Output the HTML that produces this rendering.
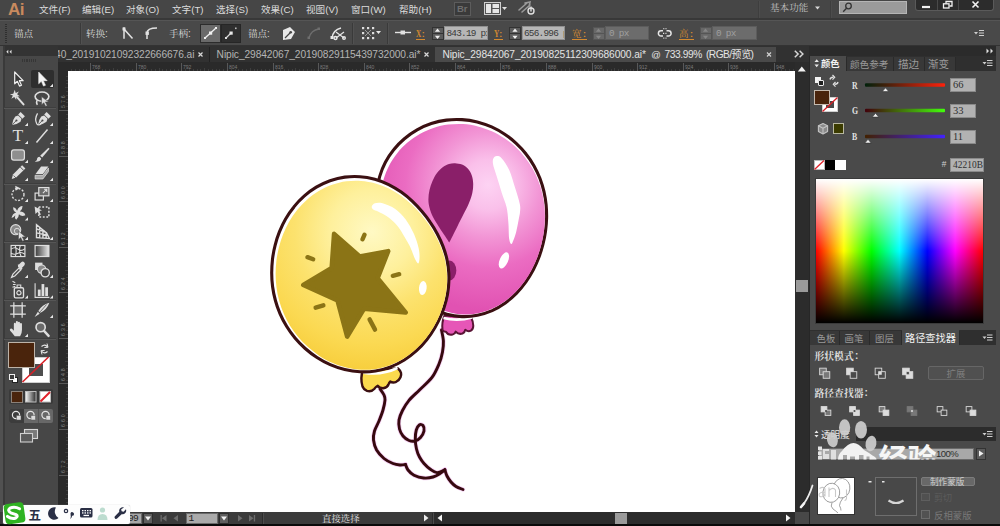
<!DOCTYPE html>
<html><head><meta charset="utf-8"><title>Adobe Illustrator</title>
<style>
html,body{margin:0;padding:0;background:#464646;}
body{width:1000px;height:526px;overflow:hidden;position:relative;font-family:"Liberation Sans",sans-serif;}
#app{position:absolute;left:0;top:0;width:1000px;height:526px;overflow:hidden;background:#464646;}
#app div,#app span{position:absolute;box-sizing:border-box;white-space:nowrap;}
#ov{position:absolute;left:0;top:0;}
#ov text{font-family:"Liberation Sans","Noto Sans CJK SC",sans-serif;}
#ov text.sf{font-family:"Liberation Serif","Noto Serif CJK SC",serif;}
</style></head><body><div id="app">
<div style="left:0px;top:0px;width:1000px;height:20px;background:#464646;"></div>
<div style="left:0px;top:18px;width:1000px;height:1.5px;background:#383838;"></div>
<div style="left:0px;top:20px;width:1000px;height:1px;background:#555;"></div>
<div style="left:0px;top:21px;width:1000px;height:25px;background:#494949;"></div>
<div style="left:0px;top:45px;width:1000px;height:1px;background:#333;"></div>
<div style="left:58px;top:46px;width:751px;height:16px;background:#313131;"></div>
<div style="left:58px;top:62px;width:751px;height:9px;background:#2a2a2a;"></div>
<div style="left:68px;top:71px;width:727px;height:441px;background:#fff;"></div>
<div style="left:58px;top:71px;width:10px;height:441px;background:#2a2a2a;"></div>
<div style="left:795px;top:62px;width:14px;height:450px;background:#2c2c2c;"></div>
<div style="left:796px;top:280px;width:12px;height:12px;background:#9a9a9a;"></div>
<div style="left:0px;top:512px;width:809px;height:12px;background:#3b3b3b;"></div>
<div style="left:0px;top:524px;width:1000px;height:2px;background:#0a0a0a;"></div>
<div style="left:0px;top:46px;width:58px;height:466px;background:#474747;"></div>
<div style="left:0px;top:46px;width:58px;height:10px;background:#333;"></div>
<div style="left:0px;top:46px;width:2.5px;height:466px;background:#515151;"></div>
<div style="left:2.5px;top:46px;width:2px;height:466px;background:#3a3a3a;"></div>
<div style="left:809px;top:46px;width:191px;height:478px;background:#4a4a4a;"></div>
<div style="left:808.5px;top:46px;width:1.8px;height:478px;background:#272727;"></div>
<span style="left:8px;top:-0.38px;font-size:17px;line-height:19.533px;color:#c98a5e;letter-spacing:-0.500px;font-weight:bold;">Ai</span>
<div style="left:454px;top:2px;width:17px;height:14px;background:#3a3a3a;border:1px solid #5c5c5c;"></div>
<span style="left:457px;top:4.40px;font-size:9.5px;line-height:10.915px;color:#6e6e6e;font-weight:bold;">Br</span>
<div style="left:758px;top:1px;width:1px;height:17px;background:#3e3e3e;"></div>
<div style="left:759px;top:1px;width:1px;height:17px;background:#4c4c4c;"></div>
<div style="left:830px;top:1px;width:1px;height:17px;background:#3e3e3e;"></div>
<div style="left:831px;top:1px;width:1px;height:17px;background:#4c4c4c;"></div>
<div style="left:839px;top:1px;width:68px;height:13px;background:#9b9b9b;border:1px solid #b5b5b5;"></div>
<div style="left:915px;top:0px;width:79px;height:11px;background:#2c2c2c;border-radius:0 0 3px 3px;border:1px solid #5a5a5a;border-top:none;"></div>
<div style="left:937px;top:0px;width:1px;height:10px;background:#4a4a4a;"></div>
<div style="left:958px;top:0px;width:1px;height:10px;background:#4a4a4a;"></div>
<div style="left:5px;top:24px;width:2px;height:1px;background:#2f2f2f;"></div>
<div style="left:5px;top:26px;width:2px;height:1px;background:#2f2f2f;"></div>
<div style="left:5px;top:28px;width:2px;height:1px;background:#2f2f2f;"></div>
<div style="left:5px;top:30px;width:2px;height:1px;background:#2f2f2f;"></div>
<div style="left:5px;top:32px;width:2px;height:1px;background:#2f2f2f;"></div>
<div style="left:5px;top:34px;width:2px;height:1px;background:#2f2f2f;"></div>
<div style="left:5px;top:36px;width:2px;height:1px;background:#2f2f2f;"></div>
<div style="left:5px;top:38px;width:2px;height:1px;background:#2f2f2f;"></div>
<div style="left:5px;top:40px;width:2px;height:1px;background:#2f2f2f;"></div>
<div style="left:5px;top:42px;width:2px;height:1px;background:#2f2f2f;"></div>
<div style="left:80px;top:23px;width:1px;height:21px;background:#3a3a3a;"></div>
<div style="left:81px;top:23px;width:1px;height:21px;background:#515151;"></div>
<span style="left:105px;top:27.95px;font-size:10px;line-height:11.49px;color:#d6d6d6;">:</span>
<span style="left:188px;top:27.95px;font-size:10px;line-height:11.49px;color:#d6d6d6;">:</span>
<div style="left:200px;top:24px;width:21px;height:19px;background:#6a6a6a;border:1px solid #2c2c2c;"></div>
<div style="left:221px;top:24px;width:20px;height:19px;background:#2f2f2f;border:1px solid #262626;"></div>
<span style="left:267px;top:27.95px;font-size:10px;line-height:11.49px;color:#d6d6d6;">:</span>
<div style="left:352px;top:23px;width:1px;height:21px;background:#3a3a3a;"></div>
<div style="left:353px;top:23px;width:1px;height:21px;background:#515151;"></div>
<div style="left:387px;top:23px;width:1px;height:21px;background:#3a3a3a;"></div>
<div style="left:388px;top:23px;width:1px;height:21px;background:#515151;"></div>
<span style="left:416.4px;top:28.43px;font-size:9.8px;line-height:11.26px;color:#d48a30;font-weight:bold;font-family:'Liberation Serif';transform-origin:0 0;transform:scaleX(0.74);">X</span>
<span style="left:421.7px;top:29.06px;font-size:9px;line-height:10.341px;color:#d48a30;font-weight:bold;">:</span>
<div style="left:416px;top:38.8px;width:9px;height:1px;background:#d48a30;"></div>
<div style="left:431.5px;top:26.5px;width:12px;height:7.2px;background:#5c5c5c;border:1px solid #333;"></div>
<div style="left:431.5px;top:33px;width:12px;height:7.2px;background:#5c5c5c;border:1px solid #333;"></div>
<div style="left:444px;top:26.2px;width:43.5px;height:14px;background:#b6b6b6;border:1px solid #909090;"></div>
<div style="left:446.4px;top:27px;width:40.5px;height:13px;overflow:hidden;"><span style="left:0;top:0.800px;font-family:'Liberation Mono';font-size:9.400px;line-height:12px;letter-spacing:-0.740px;color:#3a3a3a;">843.19 px</span></div>
<span style="left:494px;top:28.43px;font-size:9.8px;line-height:11.26px;color:#d48a30;font-weight:bold;font-family:'Liberation Serif';transform-origin:0 0;transform:scaleX(0.74);">Y</span>
<span style="left:499.3px;top:29.06px;font-size:9px;line-height:10.341px;color:#d48a30;font-weight:bold;">:</span>
<div style="left:493.6px;top:38.8px;width:9px;height:1px;background:#d48a30;"></div>
<div style="left:509px;top:26.5px;width:12px;height:7.2px;background:#5c5c5c;border:1px solid #333;"></div>
<div style="left:509px;top:33px;width:12px;height:7.2px;background:#5c5c5c;border:1px solid #333;"></div>
<div style="left:521.5px;top:26.2px;width:43.5px;height:14px;background:#b6b6b6;border:1px solid #909090;"></div>
<div style="left:523.9px;top:27px;width:40.5px;height:13px;overflow:hidden;"><span style="left:0;top:0.800px;font-family:'Liberation Mono';font-size:9.400px;line-height:12px;letter-spacing:-0.740px;color:#3a3a3a;">656.996 px</span></div>
<span style="left:583px;top:28.86px;font-size:9px;line-height:10.341px;color:#d48a30;font-weight:bold;">:</span>
<div style="left:572px;top:38.8px;width:15px;height:1px;background:#d48a30;"></div>
<div style="left:592.5px;top:26.5px;width:12px;height:7.2px;background:#686868;border:1px solid #555;"></div>
<div style="left:592.5px;top:33px;width:12px;height:7.2px;background:#686868;border:1px solid #555;"></div>
<div style="left:604.5px;top:26.2px;width:44.5px;height:14px;background:#6c6c6c;border:1px solid #5c5c5c;"></div>
<div style="left:609px;top:27px;width:39.5px;height:13px;overflow:hidden;"><span style="left:0;top:0.800px;font-family:'Liberation Mono';font-size:9.400px;line-height:12px;letter-spacing:-0.740px;color:#a0a0a0;">0 px</span></div>
<span style="left:690px;top:28.86px;font-size:9px;line-height:10.341px;color:#d48a30;font-weight:bold;">:</span>
<div style="left:679px;top:38.8px;width:15px;height:1px;background:#d48a30;"></div>
<div style="left:699.5px;top:26.5px;width:12px;height:7.2px;background:#686868;border:1px solid #555;"></div>
<div style="left:699.5px;top:33px;width:12px;height:7.2px;background:#686868;border:1px solid #555;"></div>
<div style="left:711.5px;top:26.2px;width:45.5px;height:14px;background:#6c6c6c;border:1px solid #5c5c5c;"></div>
<div style="left:716px;top:27px;width:40.5px;height:13px;overflow:hidden;"><span style="left:0;top:0.800px;font-family:'Liberation Mono';font-size:9.400px;line-height:12px;letter-spacing:-0.740px;color:#a0a0a0;">0 px</span></div>
<div style="left:58px;top:46px;width:160px;height:16px;overflow:hidden;"><span style="left:-2.9px;top:2.8px;font-size:10.2px;line-height:12px;color:#b4b4b4;letter-spacing:-0.07px;">40_20191021092322666676.ai</span></div>
<div style="left:209px;top:47px;width:1px;height:15px;background:#222;"></div>
<span style="left:216.6px;top:48.97px;font-size:10.2px;line-height:11.72px;color:#b4b4b4;letter-spacing:-0.072px;">Nipic_29842067_20190829115439732000.ai*</span>
<div style="left:435px;top:47px;width:341px;height:15px;background:#4a4a4a;"></div>
<span style="left:442.4px;top:48.97px;font-size:10.2px;line-height:11.72px;color:#e4e4e4;letter-spacing:-0.082px;">Nipic_29842067_20190825112309686000.ai*</span>
<span style="left:651.3px;top:49.69px;font-size:9.4px;line-height:10.801px;color:#e4e4e4;">@</span>
<span style="left:664.4px;top:48.97px;font-size:10.2px;line-height:11.72px;color:#e4e4e4;letter-spacing:-0.381px;">733.99%</span>
<span style="left:706px;top:48.97px;font-size:10.2px;line-height:11.72px;color:#e4e4e4;letter-spacing:-0.547px;">(RGB/</span>
<span style="left:750.5px;top:48.97px;font-size:10.2px;line-height:11.72px;color:#e4e4e4;">)</span>
<div style="left:22px;top:59px;width:1.2px;height:3px;background:#363636;"></div>
<div style="left:24.2px;top:59px;width:1.2px;height:3px;background:#363636;"></div>
<div style="left:26.4px;top:59px;width:1.2px;height:3px;background:#363636;"></div>
<div style="left:28.6px;top:59px;width:1.2px;height:3px;background:#363636;"></div>
<div style="left:30.8px;top:59px;width:1.2px;height:3px;background:#363636;"></div>
<div style="left:33px;top:59px;width:1.2px;height:3px;background:#363636;"></div>
<div style="left:35.2px;top:59px;width:1.2px;height:3px;background:#363636;"></div>
<div style="left:90px;top:63px;width:1px;height:8px;background:#585858;"></div>
<span style="left:92px;top:64.77px;font-size:5px;line-height:5.745px;color:#7c7c7c;">768</span>
<div style="left:94px;top:69px;width:1px;height:2px;background:#3e3e3e;"></div>
<div style="left:98px;top:69px;width:1px;height:2px;background:#3e3e3e;"></div>
<div style="left:102px;top:69px;width:1px;height:2px;background:#3e3e3e;"></div>
<div style="left:105px;top:69px;width:1px;height:2px;background:#3e3e3e;"></div>
<div style="left:109px;top:69px;width:1px;height:2px;background:#3e3e3e;"></div>
<div style="left:113px;top:68px;width:1px;height:3px;background:#3e3e3e;"></div>
<div style="left:117px;top:69px;width:1px;height:2px;background:#3e3e3e;"></div>
<div style="left:121px;top:69px;width:1px;height:2px;background:#3e3e3e;"></div>
<div style="left:124px;top:69px;width:1px;height:2px;background:#3e3e3e;"></div>
<div style="left:128px;top:69px;width:1px;height:2px;background:#3e3e3e;"></div>
<div style="left:132px;top:69px;width:1px;height:2px;background:#3e3e3e;"></div>
<div style="left:136px;top:63px;width:1px;height:8px;background:#585858;"></div>
<span style="left:138px;top:64.77px;font-size:5px;line-height:5.745px;color:#7c7c7c;">780</span>
<div style="left:140px;top:69px;width:1px;height:2px;background:#3e3e3e;"></div>
<div style="left:143px;top:69px;width:1px;height:2px;background:#3e3e3e;"></div>
<div style="left:147px;top:69px;width:1px;height:2px;background:#3e3e3e;"></div>
<div style="left:151px;top:69px;width:1px;height:2px;background:#3e3e3e;"></div>
<div style="left:155px;top:69px;width:1px;height:2px;background:#3e3e3e;"></div>
<div style="left:159px;top:68px;width:1px;height:3px;background:#3e3e3e;"></div>
<div style="left:162px;top:69px;width:1px;height:2px;background:#3e3e3e;"></div>
<div style="left:166px;top:69px;width:1px;height:2px;background:#3e3e3e;"></div>
<div style="left:170px;top:69px;width:1px;height:2px;background:#3e3e3e;"></div>
<div style="left:174px;top:69px;width:1px;height:2px;background:#3e3e3e;"></div>
<div style="left:178px;top:69px;width:1px;height:2px;background:#3e3e3e;"></div>
<div style="left:181px;top:63px;width:1px;height:8px;background:#585858;"></div>
<span style="left:183px;top:64.77px;font-size:5px;line-height:5.745px;color:#7c7c7c;">792</span>
<div style="left:185px;top:69px;width:1px;height:2px;background:#3e3e3e;"></div>
<div style="left:189px;top:69px;width:1px;height:2px;background:#3e3e3e;"></div>
<div style="left:193px;top:69px;width:1px;height:2px;background:#3e3e3e;"></div>
<div style="left:197px;top:69px;width:1px;height:2px;background:#3e3e3e;"></div>
<div style="left:200px;top:69px;width:1px;height:2px;background:#3e3e3e;"></div>
<div style="left:204px;top:68px;width:1px;height:3px;background:#3e3e3e;"></div>
<div style="left:208px;top:69px;width:1px;height:2px;background:#3e3e3e;"></div>
<div style="left:212px;top:69px;width:1px;height:2px;background:#3e3e3e;"></div>
<div style="left:216px;top:69px;width:1px;height:2px;background:#3e3e3e;"></div>
<div style="left:219px;top:69px;width:1px;height:2px;background:#3e3e3e;"></div>
<div style="left:223px;top:69px;width:1px;height:2px;background:#3e3e3e;"></div>
<div style="left:227px;top:63px;width:1px;height:8px;background:#585858;"></div>
<span style="left:229px;top:64.77px;font-size:5px;line-height:5.745px;color:#7c7c7c;">804</span>
<div style="left:231px;top:69px;width:1px;height:2px;background:#3e3e3e;"></div>
<div style="left:235px;top:69px;width:1px;height:2px;background:#3e3e3e;"></div>
<div style="left:238px;top:69px;width:1px;height:2px;background:#3e3e3e;"></div>
<div style="left:242px;top:69px;width:1px;height:2px;background:#3e3e3e;"></div>
<div style="left:246px;top:69px;width:1px;height:2px;background:#3e3e3e;"></div>
<div style="left:250px;top:68px;width:1px;height:3px;background:#3e3e3e;"></div>
<div style="left:254px;top:69px;width:1px;height:2px;background:#3e3e3e;"></div>
<div style="left:257px;top:69px;width:1px;height:2px;background:#3e3e3e;"></div>
<div style="left:261px;top:69px;width:1px;height:2px;background:#3e3e3e;"></div>
<div style="left:265px;top:69px;width:1px;height:2px;background:#3e3e3e;"></div>
<div style="left:269px;top:69px;width:1px;height:2px;background:#3e3e3e;"></div>
<div style="left:273px;top:63px;width:1px;height:8px;background:#585858;"></div>
<span style="left:275px;top:64.77px;font-size:5px;line-height:5.745px;color:#7c7c7c;">816</span>
<div style="left:276px;top:69px;width:1px;height:2px;background:#3e3e3e;"></div>
<div style="left:280px;top:69px;width:1px;height:2px;background:#3e3e3e;"></div>
<div style="left:284px;top:69px;width:1px;height:2px;background:#3e3e3e;"></div>
<div style="left:288px;top:69px;width:1px;height:2px;background:#3e3e3e;"></div>
<div style="left:292px;top:69px;width:1px;height:2px;background:#3e3e3e;"></div>
<div style="left:295px;top:68px;width:1px;height:3px;background:#3e3e3e;"></div>
<div style="left:299px;top:69px;width:1px;height:2px;background:#3e3e3e;"></div>
<div style="left:303px;top:69px;width:1px;height:2px;background:#3e3e3e;"></div>
<div style="left:307px;top:69px;width:1px;height:2px;background:#3e3e3e;"></div>
<div style="left:311px;top:69px;width:1px;height:2px;background:#3e3e3e;"></div>
<div style="left:314px;top:69px;width:1px;height:2px;background:#3e3e3e;"></div>
<div style="left:318px;top:63px;width:1px;height:8px;background:#585858;"></div>
<span style="left:320px;top:64.77px;font-size:5px;line-height:5.745px;color:#7c7c7c;">828</span>
<div style="left:322px;top:69px;width:1px;height:2px;background:#3e3e3e;"></div>
<div style="left:326px;top:69px;width:1px;height:2px;background:#3e3e3e;"></div>
<div style="left:329px;top:69px;width:1px;height:2px;background:#3e3e3e;"></div>
<div style="left:333px;top:69px;width:1px;height:2px;background:#3e3e3e;"></div>
<div style="left:337px;top:69px;width:1px;height:2px;background:#3e3e3e;"></div>
<div style="left:341px;top:68px;width:1px;height:3px;background:#3e3e3e;"></div>
<div style="left:345px;top:69px;width:1px;height:2px;background:#3e3e3e;"></div>
<div style="left:348px;top:69px;width:1px;height:2px;background:#3e3e3e;"></div>
<div style="left:352px;top:69px;width:1px;height:2px;background:#3e3e3e;"></div>
<div style="left:356px;top:69px;width:1px;height:2px;background:#3e3e3e;"></div>
<div style="left:360px;top:69px;width:1px;height:2px;background:#3e3e3e;"></div>
<div style="left:364px;top:63px;width:1px;height:8px;background:#585858;"></div>
<span style="left:366px;top:64.77px;font-size:5px;line-height:5.745px;color:#7c7c7c;">840</span>
<div style="left:367px;top:69px;width:1px;height:2px;background:#3e3e3e;"></div>
<div style="left:371px;top:69px;width:1px;height:2px;background:#3e3e3e;"></div>
<div style="left:375px;top:69px;width:1px;height:2px;background:#3e3e3e;"></div>
<div style="left:379px;top:69px;width:1px;height:2px;background:#3e3e3e;"></div>
<div style="left:383px;top:69px;width:1px;height:2px;background:#3e3e3e;"></div>
<div style="left:386px;top:68px;width:1px;height:3px;background:#3e3e3e;"></div>
<div style="left:390px;top:69px;width:1px;height:2px;background:#3e3e3e;"></div>
<div style="left:394px;top:69px;width:1px;height:2px;background:#3e3e3e;"></div>
<div style="left:398px;top:69px;width:1px;height:2px;background:#3e3e3e;"></div>
<div style="left:402px;top:69px;width:1px;height:2px;background:#3e3e3e;"></div>
<div style="left:405px;top:69px;width:1px;height:2px;background:#3e3e3e;"></div>
<div style="left:409px;top:63px;width:1px;height:8px;background:#585858;"></div>
<span style="left:411px;top:64.77px;font-size:5px;line-height:5.745px;color:#7c7c7c;">852</span>
<div style="left:413px;top:69px;width:1px;height:2px;background:#3e3e3e;"></div>
<div style="left:417px;top:69px;width:1px;height:2px;background:#3e3e3e;"></div>
<div style="left:421px;top:69px;width:1px;height:2px;background:#3e3e3e;"></div>
<div style="left:424px;top:69px;width:1px;height:2px;background:#3e3e3e;"></div>
<div style="left:428px;top:69px;width:1px;height:2px;background:#3e3e3e;"></div>
<div style="left:432px;top:68px;width:1px;height:3px;background:#3e3e3e;"></div>
<div style="left:436px;top:69px;width:1px;height:2px;background:#3e3e3e;"></div>
<div style="left:440px;top:69px;width:1px;height:2px;background:#3e3e3e;"></div>
<div style="left:443px;top:69px;width:1px;height:2px;background:#3e3e3e;"></div>
<div style="left:447px;top:69px;width:1px;height:2px;background:#3e3e3e;"></div>
<div style="left:451px;top:69px;width:1px;height:2px;background:#3e3e3e;"></div>
<div style="left:455px;top:63px;width:1px;height:8px;background:#585858;"></div>
<span style="left:457px;top:64.77px;font-size:5px;line-height:5.745px;color:#7c7c7c;">864</span>
<div style="left:459px;top:69px;width:1px;height:2px;background:#3e3e3e;"></div>
<div style="left:462px;top:69px;width:1px;height:2px;background:#3e3e3e;"></div>
<div style="left:466px;top:69px;width:1px;height:2px;background:#3e3e3e;"></div>
<div style="left:470px;top:69px;width:1px;height:2px;background:#3e3e3e;"></div>
<div style="left:474px;top:69px;width:1px;height:2px;background:#3e3e3e;"></div>
<div style="left:478px;top:68px;width:1px;height:3px;background:#3e3e3e;"></div>
<div style="left:481px;top:69px;width:1px;height:2px;background:#3e3e3e;"></div>
<div style="left:485px;top:69px;width:1px;height:2px;background:#3e3e3e;"></div>
<div style="left:489px;top:69px;width:1px;height:2px;background:#3e3e3e;"></div>
<div style="left:493px;top:69px;width:1px;height:2px;background:#3e3e3e;"></div>
<div style="left:497px;top:69px;width:1px;height:2px;background:#3e3e3e;"></div>
<div style="left:500px;top:63px;width:1px;height:8px;background:#585858;"></div>
<span style="left:502px;top:64.77px;font-size:5px;line-height:5.745px;color:#7c7c7c;">876</span>
<div style="left:504px;top:69px;width:1px;height:2px;background:#3e3e3e;"></div>
<div style="left:508px;top:69px;width:1px;height:2px;background:#3e3e3e;"></div>
<div style="left:512px;top:69px;width:1px;height:2px;background:#3e3e3e;"></div>
<div style="left:516px;top:69px;width:1px;height:2px;background:#3e3e3e;"></div>
<div style="left:519px;top:69px;width:1px;height:2px;background:#3e3e3e;"></div>
<div style="left:523px;top:68px;width:1px;height:3px;background:#3e3e3e;"></div>
<div style="left:527px;top:69px;width:1px;height:2px;background:#3e3e3e;"></div>
<div style="left:531px;top:69px;width:1px;height:2px;background:#3e3e3e;"></div>
<div style="left:535px;top:69px;width:1px;height:2px;background:#3e3e3e;"></div>
<div style="left:538px;top:69px;width:1px;height:2px;background:#3e3e3e;"></div>
<div style="left:542px;top:69px;width:1px;height:2px;background:#3e3e3e;"></div>
<div style="left:546px;top:63px;width:1px;height:8px;background:#585858;"></div>
<span style="left:548px;top:64.77px;font-size:5px;line-height:5.745px;color:#7c7c7c;">888</span>
<div style="left:550px;top:69px;width:1px;height:2px;background:#3e3e3e;"></div>
<div style="left:554px;top:69px;width:1px;height:2px;background:#3e3e3e;"></div>
<div style="left:557px;top:69px;width:1px;height:2px;background:#3e3e3e;"></div>
<div style="left:561px;top:69px;width:1px;height:2px;background:#3e3e3e;"></div>
<div style="left:565px;top:69px;width:1px;height:2px;background:#3e3e3e;"></div>
<div style="left:569px;top:68px;width:1px;height:3px;background:#3e3e3e;"></div>
<div style="left:573px;top:69px;width:1px;height:2px;background:#3e3e3e;"></div>
<div style="left:576px;top:69px;width:1px;height:2px;background:#3e3e3e;"></div>
<div style="left:580px;top:69px;width:1px;height:2px;background:#3e3e3e;"></div>
<div style="left:584px;top:69px;width:1px;height:2px;background:#3e3e3e;"></div>
<div style="left:588px;top:69px;width:1px;height:2px;background:#3e3e3e;"></div>
<div style="left:592px;top:63px;width:1px;height:8px;background:#585858;"></div>
<span style="left:594px;top:64.77px;font-size:5px;line-height:5.745px;color:#7c7c7c;">900</span>
<div style="left:595px;top:69px;width:1px;height:2px;background:#3e3e3e;"></div>
<div style="left:599px;top:69px;width:1px;height:2px;background:#3e3e3e;"></div>
<div style="left:603px;top:69px;width:1px;height:2px;background:#3e3e3e;"></div>
<div style="left:607px;top:69px;width:1px;height:2px;background:#3e3e3e;"></div>
<div style="left:611px;top:69px;width:1px;height:2px;background:#3e3e3e;"></div>
<div style="left:614px;top:68px;width:1px;height:3px;background:#3e3e3e;"></div>
<div style="left:618px;top:69px;width:1px;height:2px;background:#3e3e3e;"></div>
<div style="left:622px;top:69px;width:1px;height:2px;background:#3e3e3e;"></div>
<div style="left:626px;top:69px;width:1px;height:2px;background:#3e3e3e;"></div>
<div style="left:630px;top:69px;width:1px;height:2px;background:#3e3e3e;"></div>
<div style="left:633px;top:69px;width:1px;height:2px;background:#3e3e3e;"></div>
<div style="left:637px;top:63px;width:1px;height:8px;background:#585858;"></div>
<span style="left:639px;top:64.77px;font-size:5px;line-height:5.745px;color:#7c7c7c;">912</span>
<div style="left:641px;top:69px;width:1px;height:2px;background:#3e3e3e;"></div>
<div style="left:645px;top:69px;width:1px;height:2px;background:#3e3e3e;"></div>
<div style="left:649px;top:69px;width:1px;height:2px;background:#3e3e3e;"></div>
<div style="left:652px;top:69px;width:1px;height:2px;background:#3e3e3e;"></div>
<div style="left:656px;top:69px;width:1px;height:2px;background:#3e3e3e;"></div>
<div style="left:660px;top:68px;width:1px;height:3px;background:#3e3e3e;"></div>
<div style="left:664px;top:69px;width:1px;height:2px;background:#3e3e3e;"></div>
<div style="left:668px;top:69px;width:1px;height:2px;background:#3e3e3e;"></div>
<div style="left:671px;top:69px;width:1px;height:2px;background:#3e3e3e;"></div>
<div style="left:675px;top:69px;width:1px;height:2px;background:#3e3e3e;"></div>
<div style="left:679px;top:69px;width:1px;height:2px;background:#3e3e3e;"></div>
<div style="left:683px;top:63px;width:1px;height:8px;background:#585858;"></div>
<span style="left:685px;top:64.77px;font-size:5px;line-height:5.745px;color:#7c7c7c;">924</span>
<div style="left:687px;top:69px;width:1px;height:2px;background:#3e3e3e;"></div>
<div style="left:690px;top:69px;width:1px;height:2px;background:#3e3e3e;"></div>
<div style="left:694px;top:69px;width:1px;height:2px;background:#3e3e3e;"></div>
<div style="left:698px;top:69px;width:1px;height:2px;background:#3e3e3e;"></div>
<div style="left:702px;top:69px;width:1px;height:2px;background:#3e3e3e;"></div>
<div style="left:706px;top:68px;width:1px;height:3px;background:#3e3e3e;"></div>
<div style="left:709px;top:69px;width:1px;height:2px;background:#3e3e3e;"></div>
<div style="left:713px;top:69px;width:1px;height:2px;background:#3e3e3e;"></div>
<div style="left:717px;top:69px;width:1px;height:2px;background:#3e3e3e;"></div>
<div style="left:721px;top:69px;width:1px;height:2px;background:#3e3e3e;"></div>
<div style="left:725px;top:69px;width:1px;height:2px;background:#3e3e3e;"></div>
<div style="left:728px;top:63px;width:1px;height:8px;background:#585858;"></div>
<span style="left:730px;top:64.77px;font-size:5px;line-height:5.745px;color:#7c7c7c;">936</span>
<div style="left:732px;top:69px;width:1px;height:2px;background:#3e3e3e;"></div>
<div style="left:736px;top:69px;width:1px;height:2px;background:#3e3e3e;"></div>
<div style="left:740px;top:69px;width:1px;height:2px;background:#3e3e3e;"></div>
<div style="left:744px;top:69px;width:1px;height:2px;background:#3e3e3e;"></div>
<div style="left:747px;top:69px;width:1px;height:2px;background:#3e3e3e;"></div>
<div style="left:751px;top:68px;width:1px;height:3px;background:#3e3e3e;"></div>
<div style="left:755px;top:69px;width:1px;height:2px;background:#3e3e3e;"></div>
<div style="left:759px;top:69px;width:1px;height:2px;background:#3e3e3e;"></div>
<div style="left:763px;top:69px;width:1px;height:2px;background:#3e3e3e;"></div>
<div style="left:766px;top:69px;width:1px;height:2px;background:#3e3e3e;"></div>
<div style="left:770px;top:69px;width:1px;height:2px;background:#3e3e3e;"></div>
<div style="left:774px;top:63px;width:1px;height:8px;background:#585858;"></div>
<span style="left:776px;top:64.77px;font-size:5px;line-height:5.745px;color:#7c7c7c;">948</span>
<div style="left:778px;top:69px;width:1px;height:2px;background:#3e3e3e;"></div>
<div style="left:781px;top:69px;width:1px;height:2px;background:#3e3e3e;"></div>
<div style="left:785px;top:69px;width:1px;height:2px;background:#3e3e3e;"></div>
<div style="left:789px;top:69px;width:1px;height:2px;background:#3e3e3e;"></div>
<div style="left:793px;top:69px;width:1px;height:2px;background:#3e3e3e;"></div>
<div style="left:86px;top:69px;width:1px;height:2px;background:#3e3e3e;"></div>
<div style="left:83px;top:69px;width:1px;height:2px;background:#3e3e3e;"></div>
<div style="left:79px;top:69px;width:1px;height:2px;background:#3e3e3e;"></div>
<div style="left:75px;top:69px;width:1px;height:2px;background:#3e3e3e;"></div>
<div style="left:71px;top:69px;width:1px;height:2px;background:#3e3e3e;"></div>
<div style="left:59px;top:110px;width:9px;height:1px;background:#585858;"></div>
<span style="left:59.5px;top:108px;font-size:5.2px;line-height:6px;color:#858585;letter-spacing:2px;transform-origin:0 0;transform:rotate(-90deg);">576</span>
<div style="left:66px;top:114px;width:2px;height:1px;background:#3e3e3e;"></div>
<div style="left:66px;top:118px;width:2px;height:1px;background:#3e3e3e;"></div>
<div style="left:66px;top:121px;width:2px;height:1px;background:#3e3e3e;"></div>
<div style="left:66px;top:125px;width:2px;height:1px;background:#3e3e3e;"></div>
<div style="left:66px;top:129px;width:2px;height:1px;background:#3e3e3e;"></div>
<div style="left:65px;top:133px;width:3px;height:1px;background:#3e3e3e;"></div>
<div style="left:66px;top:137px;width:2px;height:1px;background:#3e3e3e;"></div>
<div style="left:66px;top:140px;width:2px;height:1px;background:#3e3e3e;"></div>
<div style="left:66px;top:144px;width:2px;height:1px;background:#3e3e3e;"></div>
<div style="left:66px;top:148px;width:2px;height:1px;background:#3e3e3e;"></div>
<div style="left:66px;top:152px;width:2px;height:1px;background:#3e3e3e;"></div>
<div style="left:59px;top:156px;width:9px;height:1px;background:#585858;"></div>
<span style="left:59.5px;top:154px;font-size:5.2px;line-height:6px;color:#858585;letter-spacing:2px;transform-origin:0 0;transform:rotate(-90deg);">588</span>
<div style="left:66px;top:160px;width:2px;height:1px;background:#3e3e3e;"></div>
<div style="left:66px;top:164px;width:2px;height:1px;background:#3e3e3e;"></div>
<div style="left:66px;top:167px;width:2px;height:1px;background:#3e3e3e;"></div>
<div style="left:66px;top:171px;width:2px;height:1px;background:#3e3e3e;"></div>
<div style="left:66px;top:175px;width:2px;height:1px;background:#3e3e3e;"></div>
<div style="left:65px;top:179px;width:3px;height:1px;background:#3e3e3e;"></div>
<div style="left:66px;top:183px;width:2px;height:1px;background:#3e3e3e;"></div>
<div style="left:66px;top:186px;width:2px;height:1px;background:#3e3e3e;"></div>
<div style="left:66px;top:190px;width:2px;height:1px;background:#3e3e3e;"></div>
<div style="left:66px;top:194px;width:2px;height:1px;background:#3e3e3e;"></div>
<div style="left:66px;top:198px;width:2px;height:1px;background:#3e3e3e;"></div>
<div style="left:59px;top:201px;width:9px;height:1px;background:#585858;"></div>
<span style="left:59.5px;top:199px;font-size:5.2px;line-height:6px;color:#858585;letter-spacing:2px;transform-origin:0 0;transform:rotate(-90deg);">600</span>
<div style="left:66px;top:205px;width:2px;height:1px;background:#3e3e3e;"></div>
<div style="left:66px;top:209px;width:2px;height:1px;background:#3e3e3e;"></div>
<div style="left:66px;top:212px;width:2px;height:1px;background:#3e3e3e;"></div>
<div style="left:66px;top:216px;width:2px;height:1px;background:#3e3e3e;"></div>
<div style="left:66px;top:220px;width:2px;height:1px;background:#3e3e3e;"></div>
<div style="left:65px;top:224px;width:3px;height:1px;background:#3e3e3e;"></div>
<div style="left:66px;top:228px;width:2px;height:1px;background:#3e3e3e;"></div>
<div style="left:66px;top:231px;width:2px;height:1px;background:#3e3e3e;"></div>
<div style="left:66px;top:235px;width:2px;height:1px;background:#3e3e3e;"></div>
<div style="left:66px;top:239px;width:2px;height:1px;background:#3e3e3e;"></div>
<div style="left:66px;top:243px;width:2px;height:1px;background:#3e3e3e;"></div>
<div style="left:59px;top:247px;width:9px;height:1px;background:#585858;"></div>
<span style="left:59.5px;top:245px;font-size:5.2px;line-height:6px;color:#858585;letter-spacing:2px;transform-origin:0 0;transform:rotate(-90deg);">612</span>
<div style="left:66px;top:251px;width:2px;height:1px;background:#3e3e3e;"></div>
<div style="left:66px;top:255px;width:2px;height:1px;background:#3e3e3e;"></div>
<div style="left:66px;top:258px;width:2px;height:1px;background:#3e3e3e;"></div>
<div style="left:66px;top:262px;width:2px;height:1px;background:#3e3e3e;"></div>
<div style="left:66px;top:266px;width:2px;height:1px;background:#3e3e3e;"></div>
<div style="left:65px;top:270px;width:3px;height:1px;background:#3e3e3e;"></div>
<div style="left:66px;top:274px;width:2px;height:1px;background:#3e3e3e;"></div>
<div style="left:66px;top:277px;width:2px;height:1px;background:#3e3e3e;"></div>
<div style="left:66px;top:281px;width:2px;height:1px;background:#3e3e3e;"></div>
<div style="left:66px;top:285px;width:2px;height:1px;background:#3e3e3e;"></div>
<div style="left:66px;top:289px;width:2px;height:1px;background:#3e3e3e;"></div>
<div style="left:59px;top:292px;width:9px;height:1px;background:#585858;"></div>
<span style="left:59.5px;top:290px;font-size:5.2px;line-height:6px;color:#858585;letter-spacing:2px;transform-origin:0 0;transform:rotate(-90deg);">624</span>
<div style="left:66px;top:296px;width:2px;height:1px;background:#3e3e3e;"></div>
<div style="left:66px;top:300px;width:2px;height:1px;background:#3e3e3e;"></div>
<div style="left:66px;top:303px;width:2px;height:1px;background:#3e3e3e;"></div>
<div style="left:66px;top:307px;width:2px;height:1px;background:#3e3e3e;"></div>
<div style="left:66px;top:311px;width:2px;height:1px;background:#3e3e3e;"></div>
<div style="left:65px;top:315px;width:3px;height:1px;background:#3e3e3e;"></div>
<div style="left:66px;top:319px;width:2px;height:1px;background:#3e3e3e;"></div>
<div style="left:66px;top:322px;width:2px;height:1px;background:#3e3e3e;"></div>
<div style="left:66px;top:326px;width:2px;height:1px;background:#3e3e3e;"></div>
<div style="left:66px;top:330px;width:2px;height:1px;background:#3e3e3e;"></div>
<div style="left:66px;top:334px;width:2px;height:1px;background:#3e3e3e;"></div>
<div style="left:59px;top:338px;width:9px;height:1px;background:#585858;"></div>
<span style="left:59.5px;top:336px;font-size:5.2px;line-height:6px;color:#858585;letter-spacing:2px;transform-origin:0 0;transform:rotate(-90deg);">636</span>
<div style="left:66px;top:342px;width:2px;height:1px;background:#3e3e3e;"></div>
<div style="left:66px;top:346px;width:2px;height:1px;background:#3e3e3e;"></div>
<div style="left:66px;top:349px;width:2px;height:1px;background:#3e3e3e;"></div>
<div style="left:66px;top:353px;width:2px;height:1px;background:#3e3e3e;"></div>
<div style="left:66px;top:357px;width:2px;height:1px;background:#3e3e3e;"></div>
<div style="left:65px;top:361px;width:3px;height:1px;background:#3e3e3e;"></div>
<div style="left:66px;top:365px;width:2px;height:1px;background:#3e3e3e;"></div>
<div style="left:66px;top:368px;width:2px;height:1px;background:#3e3e3e;"></div>
<div style="left:66px;top:372px;width:2px;height:1px;background:#3e3e3e;"></div>
<div style="left:66px;top:376px;width:2px;height:1px;background:#3e3e3e;"></div>
<div style="left:66px;top:380px;width:2px;height:1px;background:#3e3e3e;"></div>
<div style="left:59px;top:383px;width:9px;height:1px;background:#585858;"></div>
<span style="left:59.5px;top:381px;font-size:5.2px;line-height:6px;color:#858585;letter-spacing:2px;transform-origin:0 0;transform:rotate(-90deg);">648</span>
<div style="left:66px;top:387px;width:2px;height:1px;background:#3e3e3e;"></div>
<div style="left:66px;top:391px;width:2px;height:1px;background:#3e3e3e;"></div>
<div style="left:66px;top:394px;width:2px;height:1px;background:#3e3e3e;"></div>
<div style="left:66px;top:398px;width:2px;height:1px;background:#3e3e3e;"></div>
<div style="left:66px;top:402px;width:2px;height:1px;background:#3e3e3e;"></div>
<div style="left:65px;top:406px;width:3px;height:1px;background:#3e3e3e;"></div>
<div style="left:66px;top:410px;width:2px;height:1px;background:#3e3e3e;"></div>
<div style="left:66px;top:413px;width:2px;height:1px;background:#3e3e3e;"></div>
<div style="left:66px;top:417px;width:2px;height:1px;background:#3e3e3e;"></div>
<div style="left:66px;top:421px;width:2px;height:1px;background:#3e3e3e;"></div>
<div style="left:66px;top:425px;width:2px;height:1px;background:#3e3e3e;"></div>
<div style="left:59px;top:429px;width:9px;height:1px;background:#585858;"></div>
<span style="left:59.5px;top:427px;font-size:5.2px;line-height:6px;color:#858585;letter-spacing:2px;transform-origin:0 0;transform:rotate(-90deg);">660</span>
<div style="left:66px;top:433px;width:2px;height:1px;background:#3e3e3e;"></div>
<div style="left:66px;top:437px;width:2px;height:1px;background:#3e3e3e;"></div>
<div style="left:66px;top:440px;width:2px;height:1px;background:#3e3e3e;"></div>
<div style="left:66px;top:444px;width:2px;height:1px;background:#3e3e3e;"></div>
<div style="left:66px;top:448px;width:2px;height:1px;background:#3e3e3e;"></div>
<div style="left:65px;top:452px;width:3px;height:1px;background:#3e3e3e;"></div>
<div style="left:66px;top:456px;width:2px;height:1px;background:#3e3e3e;"></div>
<div style="left:66px;top:459px;width:2px;height:1px;background:#3e3e3e;"></div>
<div style="left:66px;top:463px;width:2px;height:1px;background:#3e3e3e;"></div>
<div style="left:66px;top:467px;width:2px;height:1px;background:#3e3e3e;"></div>
<div style="left:66px;top:471px;width:2px;height:1px;background:#3e3e3e;"></div>
<div style="left:59px;top:475px;width:9px;height:1px;background:#585858;"></div>
<span style="left:59.5px;top:473px;font-size:5.2px;line-height:6px;color:#858585;letter-spacing:2px;transform-origin:0 0;transform:rotate(-90deg);">672</span>
<div style="left:66px;top:479px;width:2px;height:1px;background:#3e3e3e;"></div>
<div style="left:66px;top:483px;width:2px;height:1px;background:#3e3e3e;"></div>
<div style="left:66px;top:486px;width:2px;height:1px;background:#3e3e3e;"></div>
<div style="left:66px;top:490px;width:2px;height:1px;background:#3e3e3e;"></div>
<div style="left:66px;top:494px;width:2px;height:1px;background:#3e3e3e;"></div>
<div style="left:65px;top:498px;width:3px;height:1px;background:#3e3e3e;"></div>
<div style="left:66px;top:502px;width:2px;height:1px;background:#3e3e3e;"></div>
<div style="left:66px;top:505px;width:2px;height:1px;background:#3e3e3e;"></div>
<div style="left:66px;top:509px;width:2px;height:1px;background:#3e3e3e;"></div>
<div style="left:66px;top:106px;width:2px;height:1px;background:#3e3e3e;"></div>
<div style="left:66px;top:102px;width:2px;height:1px;background:#3e3e3e;"></div>
<div style="left:66px;top:99px;width:2px;height:1px;background:#3e3e3e;"></div>
<div style="left:66px;top:95px;width:2px;height:1px;background:#3e3e3e;"></div>
<div style="left:66px;top:91px;width:2px;height:1px;background:#3e3e3e;"></div>
<div style="left:65px;top:87px;width:3px;height:1px;background:#3e3e3e;"></div>
<div style="left:66px;top:83px;width:2px;height:1px;background:#3e3e3e;"></div>
<div style="left:66px;top:80px;width:2px;height:1px;background:#3e3e3e;"></div>
<div style="left:66px;top:76px;width:2px;height:1px;background:#3e3e3e;"></div>
<div style="left:4px;top:107px;width:52px;height:1px;background:#3e3e3e;"></div>
<div style="left:4px;top:108px;width:52px;height:1px;background:#565656;"></div>
<div style="left:4px;top:183px;width:52px;height:1px;background:#3e3e3e;"></div>
<div style="left:4px;top:184px;width:52px;height:1px;background:#565656;"></div>
<div style="left:4px;top:241px;width:52px;height:1px;background:#3e3e3e;"></div>
<div style="left:4px;top:242px;width:52px;height:1px;background:#565656;"></div>
<div style="left:4px;top:299px;width:52px;height:1px;background:#3e3e3e;"></div>
<div style="left:4px;top:300px;width:52px;height:1px;background:#565656;"></div>
<div style="left:4px;top:338px;width:52px;height:1px;background:#3e3e3e;"></div>
<div style="left:4px;top:339px;width:52px;height:1px;background:#565656;"></div>
<div style="left:31px;top:70px;width:23px;height:18px;background:#2e2e2e;border-radius:2px;"></div>
<span style="left:12.500px;top:125px;font-family:'Liberation Serif';font-size:17.500px;line-height:20px;color:#dedede;">T</span>
<div style="left:21.5px;top:356.5px;width:28px;height:26.5px;background:#fff;border:1px solid #cfcfcf;"></div>
<div style="left:28.5px;top:363.5px;width:14px;height:12.5px;background:#4e4e4e;"></div>
<div style="left:7.5px;top:342px;width:27px;height:26px;background:#4a240c;border:1px solid #bdb3a8;"></div>
<div style="left:11.5px;top:376.5px;width:6px;height:6px;background:#fff;border:1px solid #222;"></div>
<div style="left:8.5px;top:373.5px;width:6px;height:6px;background:#3a3a3a;border:1px solid #eee;"></div>
<div style="left:9px;top:389px;width:44px;height:15px;background:#3a3a3a;border-radius:2px;"></div>
<div style="left:11px;top:391px;width:11.5px;height:11.5px;background:#4a240c;border:1px solid #8a8078;"></div>
<div style="left:9px;top:408.5px;width:44px;height:14.5px;background:#686868;border-radius:2px;"></div>
<div style="left:9px;top:408.5px;width:15px;height:14.5px;background:#3c3c3c;border-radius:2px 0 0 2px;"></div>
<div style="left:38px;top:409px;width:1px;height:13.5px;background:#555;"></div>
<div style="left:809px;top:46px;width:187px;height:10px;background:#2b2b2b;"></div>
<div style="left:810px;top:56px;width:186px;height:15px;background:#2f2f2f;"></div>
<div style="left:846px;top:57px;width:109px;height:14px;background:#383838;"></div>
<div style="left:810px;top:56px;width:36px;height:15px;background:#4a4a4a;"></div>
<div style="left:810px;top:71px;width:186px;height:256px;background:#4a4a4a;"></div>
<div style="left:846px;top:57px;width:1px;height:14px;background:#2a2a2a;"></div>
<div style="left:893px;top:57px;width:1px;height:14px;background:#2a2a2a;"></div>
<div style="left:924px;top:57px;width:1px;height:14px;background:#2a2a2a;"></div>
<div style="left:955px;top:57px;width:1px;height:14px;background:#2a2a2a;"></div>
<div style="left:814.5px;top:76.5px;width:6.5px;height:6.5px;background:#f4f4f4;"></div>
<div style="left:818px;top:80px;width:6px;height:6px;background:#1e1e1e;border:1.200px solid #e8e8e8;border-radius:1px;"></div>
<div style="left:822px;top:97px;width:16px;height:15px;background:#fff;border:1px solid #cfcfcf;"></div>
<div style="left:826px;top:101px;width:8px;height:7px;background:#4a4a4a;"></div>
<div style="left:814px;top:90px;width:16px;height:15px;background:#4a240c;border:1px solid #c4b9ae;"></div>
<div style="left:833px;top:123px;width:11px;height:11px;background:#3b3b00;border:1px solid #b8b8a0;"></div>
<span style="left:851.5px;top:79.75px;font-size:10px;line-height:11.49px;color:#e2e2e2;font-weight:bold;font-family:'Liberation Serif';transform-origin:0 0;transform:scaleX(0.78);">R</span>
<div style="left:950px;top:78px;width:26px;height:14px;background:#b2b2b2;border:1px solid #8a8a8a;"></div>
<span style="left:953px;top:79.10px;font-size:10.5px;line-height:12.065px;color:#303030;font-family:'Liberation Serif';">66</span>
<span style="left:851.5px;top:105.25px;font-size:10px;line-height:11.49px;color:#e2e2e2;font-weight:bold;font-family:'Liberation Serif';transform-origin:0 0;transform:scaleX(0.78);">G</span>
<div style="left:950px;top:103.5px;width:26px;height:14px;background:#b2b2b2;border:1px solid #8a8a8a;"></div>
<span style="left:953px;top:104.60px;font-size:10.5px;line-height:12.065px;color:#303030;font-family:'Liberation Serif';">33</span>
<span style="left:851.5px;top:131.25px;font-size:10px;line-height:11.49px;color:#e2e2e2;font-weight:bold;font-family:'Liberation Serif';transform-origin:0 0;transform:scaleX(0.78);">B</span>
<div style="left:950px;top:129.5px;width:26px;height:14px;background:#b2b2b2;border:1px solid #8a8a8a;"></div>
<span style="left:953px;top:130.60px;font-size:10.5px;line-height:12.065px;color:#303030;font-family:'Liberation Serif';">11</span>
<div style="left:814px;top:160px;width:10.5px;height:10px;background:#fff;border:1px solid #bbb;"></div>
<div style="left:824.5px;top:160px;width:10.5px;height:10px;background:#000;"></div>
<div style="left:835px;top:160px;width:10.5px;height:10px;background:#fff;"></div>
<span style="left:941.5px;top:160.81px;font-size:8.5px;line-height:9.767px;color:#d0d0d0;font-family:'Liberation Mono';">#</span>
<div style="left:950px;top:158px;width:34px;height:14px;background:#b2b2b2;border:1px solid #8a8a8a;"></div>
<span style="left:953px;top:159.89px;font-size:9.4px;line-height:10.801px;color:#303030;font-family:'Liberation Serif';letter-spacing:0.050px;">42210B</span>
<div style="left:815px;top:178px;width:169px;height:146px;background:linear-gradient(to bottom,#fff 0%,rgba(255,255,255,0) 50%,rgba(0,0,0,0) 50%,#000 100%),linear-gradient(to right,#f00 0%,#ff0 16.670%,#0f0 33.330%,#0ff 50%,#00f 66.670%,#f0f 83.330%,#f00 100%);border:1px solid #3a3a3a;"></div>
<div style="left:810px;top:330px;width:186px;height:15px;background:#2f2f2f;"></div>
<div style="left:810px;top:331px;width:92px;height:14px;background:#383838;"></div>
<div style="left:902px;top:330px;width:57px;height:15px;background:#4a4a4a;"></div>
<div style="left:810px;top:345px;width:186px;height:79px;background:#4a4a4a;"></div>
<div style="left:839px;top:331px;width:1px;height:14px;background:#2a2a2a;"></div>
<div style="left:869px;top:331px;width:1px;height:14px;background:#2a2a2a;"></div>
<div style="left:901px;top:331px;width:1px;height:14px;background:#2a2a2a;"></div>
<div style="left:959px;top:331px;width:1px;height:14px;background:#2a2a2a;"></div>
<span style="left:855px;top:350.45px;font-size:10px;line-height:11.49px;color:#dedede;font-weight:bold;">:</span>
<div style="left:928px;top:366px;width:56px;height:14px;background:#505050;border:1px solid #666;border-radius:2px;"></div>
<span style="left:864.5px;top:386.95px;font-size:10px;line-height:11.49px;color:#dedede;font-weight:bold;">:</span>
<div style="left:810px;top:427px;width:186px;height:14px;background:#2c2c2c;"></div>
<div style="left:810px;top:427px;width:46px;height:14px;background:#4a4a4a;"></div>
<div style="left:818px;top:447.5px;width:156px;height:12px;background:#a8a8a8;border:1px solid #6a6a6a;"></div>
<span style="left:936px;top:448.90px;font-size:9.5px;line-height:10.915px;color:#2e2e2e;letter-spacing:-0.574px;">100%</span>
<div style="left:975.5px;top:447.5px;width:10.5px;height:12px;background:#5a5a5a;border:1px solid #333;"></div>
<div style="left:816.5px;top:476.5px;width:38.5px;height:38.5px;background:#fff;border:1px solid #333;"></div>
<div style="left:875px;top:476.5px;width:41.5px;height:39px;background:#484848;border:1px solid #6e6e6e;"></div>
<div style="left:921px;top:476.5px;width:54px;height:9.5px;background:#686868;border:1px solid #7c7c7c;border-radius:2px;"></div>
<div style="left:921px;top:493px;width:9px;height:8px;background:#505050;border:1px solid #5e5e5e;"></div>
<div style="left:921px;top:510px;width:9px;height:9px;background:#525252;border:1px solid #6c6c6c;"></div>
<div style="left:119px;top:513px;width:23px;height:11px;background:#a8a8a8;border:1px solid #6a6a6a;"></div>
<span style="left:128px;top:514.20px;font-size:9.5px;line-height:10.915px;color:#222;font-family:'Liberation Mono';letter-spacing:-0.600px;">99</span>
<div style="left:143px;top:513px;width:10px;height:11px;background:#5e5e5e;border:1px solid #2e2e2e;"></div>
<div style="left:186px;top:513px;width:32px;height:11px;background:#aaaaaa;border:1px solid #6a6a6a;"></div>
<span style="left:188.5px;top:514.20px;font-size:9.5px;line-height:10.915px;color:#222;font-family:'Liberation Mono';">1</span>
<div style="left:219px;top:513px;width:10px;height:11px;background:#5e5e5e;border:1px solid #2e2e2e;"></div>
<div style="left:262px;top:513px;width:1px;height:11px;background:#2c2c2c;"></div>
<div style="left:263px;top:513px;width:1px;height:11px;background:#4c4c4c;"></div>
<div style="left:432px;top:513px;width:1px;height:11px;background:#2c2c2c;"></div>
<div style="left:433px;top:513px;width:1px;height:11px;background:#4c4c4c;"></div>
<div style="left:434px;top:512px;width:361px;height:12px;background:#2c2c2c;"></div>
<div style="left:615px;top:513px;width:12px;height:11px;background:#9a9a9a;"></div>
<div style="left:795px;top:512px;width:14px;height:12px;background:#484848;"></div>
<div style="left:3px;top:505px;width:127px;height:18.5px;background:#fdfdfd;border-radius:2px;box-shadow:0 0 1px #aaa;"></div>
<div style="left:810px;top:459.5px;width:186px;height:15px;background:#4a4a4a;"></div>
<svg id="ov" width="1000" height="526" viewBox="0 0 1000 526">
<defs><linearGradient id="tg" x1="0" x2="1" y1="0" y2="0"><stop offset="0" stop-color="#3a3a3a"/><stop offset="1" stop-color="#e8e8e8"/></linearGradient><linearGradient id="tg2" x1="0" x2="1" y1="0" y2="0"><stop offset="0" stop-color="#fafafa"/><stop offset="1" stop-color="#2a2a2a"/></linearGradient><linearGradient id="sr"><stop offset="0" stop-color="#00210b"/><stop offset="1" stop-color="#ff210b"/></linearGradient><linearGradient id="sg"><stop offset="0" stop-color="#42000b"/><stop offset="1" stop-color="#42ff0b"/></linearGradient><linearGradient id="sb"><stop offset="0" stop-color="#422100"/><stop offset="1" stop-color="#4221ff"/></linearGradient><radialGradient id="gy" gradientUnits="userSpaceOnUse" cx="372" cy="232" r="140"><stop offset="0" stop-color="#fff9c4"/><stop offset="0.3" stop-color="#fef09c"/><stop offset="0.55" stop-color="#fce26e"/><stop offset="0.8" stop-color="#fbd952"/><stop offset="1" stop-color="#f7ce3c"/></radialGradient><radialGradient id="gp" gradientUnits="userSpaceOnUse" cx="488" cy="185" r="125"><stop offset="0" stop-color="#fdd3f3"/><stop offset="0.2" stop-color="#fac0ea"/><stop offset="0.42" stop-color="#f295d5"/><stop offset="0.66" stop-color="#eb6cc2"/><stop offset="1" stop-color="#e152b2"/></radialGradient></defs>
<g fill="#dcdcdc"><text x="39.00" y="12.80" font-size="9.6" fill="#dcdcdc">文件</text><text x="58.20" y="12.80" font-size="9.7" fill="#dcdcdc">(F)</text></g>
<g fill="#dcdcdc"><text x="82.00" y="12.80" font-size="9.6" fill="#dcdcdc">编辑</text><text x="101.20" y="12.80" font-size="9.7" fill="#dcdcdc">(E)</text></g>
<g fill="#dcdcdc"><text x="126.00" y="12.80" font-size="9.6" fill="#dcdcdc">对象</text><text x="145.20" y="12.80" font-size="9.7" fill="#dcdcdc">(O)</text></g>
<g fill="#dcdcdc"><text x="172.00" y="12.80" font-size="9.6" fill="#dcdcdc">文字</text><text x="191.20" y="12.80" font-size="9.7" fill="#dcdcdc">(T)</text></g>
<g fill="#dcdcdc"><text x="216.00" y="12.80" font-size="9.6" fill="#dcdcdc">选择</text><text x="235.20" y="12.80" font-size="9.7" fill="#dcdcdc">(S)</text></g>
<g fill="#dcdcdc"><text x="261.00" y="12.80" font-size="9.6" fill="#dcdcdc">效果</text><text x="280.20" y="12.80" font-size="9.7" fill="#dcdcdc">(C)</text></g>
<g fill="#dcdcdc"><text x="306.00" y="12.80" font-size="9.6" fill="#dcdcdc">视图</text><text x="325.20" y="12.80" font-size="9.7" fill="#dcdcdc">(V)</text></g>
<g fill="#dcdcdc"><text x="351.00" y="12.80" font-size="9.6" fill="#dcdcdc">窗口</text><text x="370.20" y="12.80" font-size="9.7" fill="#dcdcdc">(W)</text></g>
<g fill="#dcdcdc"><text x="399.00" y="12.80" font-size="9.6" fill="#dcdcdc">帮助</text><text x="418.20" y="12.80" font-size="9.7" fill="#dcdcdc">(H)</text></g>
<g><rect x="484.5" y="2.5" width="16" height="12" fill="#555" stroke="#cfcfcf"/><rect x="486" y="4" width="5" height="9" fill="#e6e6e6"/><rect x="492.5" y="4" width="6.5" height="4" fill="#e6e6e6"/><rect x="492.5" y="9" width="6.5" height="4" fill="#e6e6e6"/><path d="M502 7h5l-2.5 3z" fill="#e0e0e0"/></g>
<g fill="none" stroke="#9a9a9a" stroke-width="1.6" stroke-linecap="round"><path d="M519 10l8-7M522 12l8-7M525 3l5 -1l-1 5"/><circle cx="531" cy="11" r="3" stroke="#e0e0e0" stroke-width="1.4"/><path d="M531 7v4" stroke="#e0e0e0" stroke-width="1.4"/></g>
<text class="sf" x="770.00" y="10.80" font-size="9.6" fill="#c0c0c0">基本功能</text>
<path d="M815 6.500h5l-2.500 3z" fill="#d8d8d8"/>
<g fill="none" stroke="#333" stroke-width="1.3"><circle cx="848.5" cy="6" r="2.8"/><path d="M846.5 8.2l-3.3 3.6"/></g>
<g fill="none" stroke="#f2f2f2" stroke-width="1.6"><path d="M922 7h8" stroke-width="2.2"/><rect x="943.5" y="3.8" width="5.500" height="4.200" stroke-width="1.3"/><path d="M946 3.5v-2h6v4.5h-2.5" stroke-width="1.3"/><path d="M972.5 1.5l6 6M978.5 1.5l-6 6"/></g>
<text class="sf" x="14.00" y="37.00" font-size="9.6" fill="#d6d6d6">锚点</text>
<text class="sf" x="86.00" y="37.00" font-size="9.6" fill="#d6d6d6">转换</text>
<g fill="none" stroke="#e2e2e2" stroke-width="1.5" stroke-linecap="square"><path d="M124 28v10M124 29l8 9"/><rect x="122.5" y="27.5" width="3" height="3" fill="#e2e2e2" stroke="none"/></g>
<g fill="none" stroke="#e2e2e2" stroke-width="1.5"><path d="M147 39v-6q0-5 10-5"/><rect x="145.5" y="31.5" width="3.4" height="3.4" fill="#e2e2e2" stroke="none"/></g>
<text class="sf" x="169.00" y="37.00" font-size="9.6" fill="#d6d6d6">手柄</text>
<g stroke="#f0f0f0" stroke-width="1.3"><path d="M205 38l11-10"/><rect x="209" y="31.5" width="3.2" height="3.2" fill="#f0f0f0" stroke="none"/><rect x="204" y="37" width="2" height="2" fill="#f0f0f0" stroke="none"/><rect x="215" y="27" width="2" height="2" fill="#f0f0f0" stroke="none"/></g>
<g stroke="#d8d8d8" stroke-width="1.3"><path d="M226 38l5-5"/><rect x="229.5" y="31.5" width="3.2" height="3.2" fill="#e8e8e8" stroke="none"/><rect x="225" y="37" width="2" height="2" fill="#e0e0e0" stroke="none"/><rect x="235" y="27.5" width="1.6" height="1.6" fill="#bbb" stroke="none"/></g>
<text class="sf" x="248.00" y="37.00" font-size="9.6" fill="#d6d6d6">锚点</text>
<g fill="#e8e8e8"><path d="M283 30l7-3l5 5l-4 7l-8 1zM286.5 31.5l5 5" /><path d="M285 38l5.5-5.5" stroke="#464646" stroke-width="1.2"/><circle cx="290.7" cy="32.3" r="1.3" fill="#464646"/></g>
<g fill="none" stroke="#6e6e6e" stroke-width="1.3"><path d="M309 38q2-8 10-9"/><rect x="307.5" y="36.5" width="2.5" height="2.5" fill="#6e6e6e" stroke="none"/><rect x="317.5" y="27.5" width="2.5" height="2.5" fill="#6e6e6e" stroke="none"/></g>
<g fill="none" stroke="#e6e6e6" stroke-width="1.4"><path d="M332 38q1-8 9-10"/><rect x="330.5" y="36" width="3" height="3" fill="#e6e6e6" stroke="none"/><path d="M336 32l8 6M336 38l8-6" stroke-width="1.2"/><circle cx="335.5" cy="38" r="1.5"/><circle cx="344" cy="38" r="1.3"/></g>
<g fill="#dedede"><rect x="362" y="27" width="2.2" height="2.2"/><rect x="367" y="27" width="2.2" height="2.2"/><rect x="372" y="27" width="2.2" height="2.2"/><rect x="362" y="32" width="2.2" height="2.2"/><rect x="372" y="32" width="2.2" height="2.2"/><rect x="362" y="37" width="2.2" height="2.2"/><rect x="367" y="37" width="2.2" height="2.2"/><rect x="372" y="37" width="2.2" height="2.2"/><path d="M365 30l6 6M371 30l-6 6" stroke="#9a9a9a" stroke-width="1" /><path d="M376 31h5l-2.5 3z" fill="#e8e8e8"/></g>
<g stroke="#e2e2e2" stroke-width="1.4"><path d="M395 32.5h16"/><rect x="400.5" y="30.5" width="4.5" height="4" fill="#e2e2e2" stroke="none"/></g>
<path d="M434.9 31.800l2.600-3.200l2.600 3.200zM434.9 35.700l2.600 3.200l2.600-3.200z" fill="#f0f0f0"/>
<path d="M512.4 31.800l2.600-3.200l2.600 3.200zM512.4 35.700l2.600 3.200l2.600-3.200z" fill="#f0f0f0"/>
<text class="sf" x="572.00" y="36.80" font-size="9.6" fill="#d48a30">宽</text>
<path d="M595.9 31.800l2.600-3.200l2.600 3.200zM595.9 35.700l2.600 3.200l2.600-3.200z" fill="#868686"/>
<g fill="none" stroke="#e6e6e6" stroke-width="1.500"><path d="M663 30.800h-2a2.600 2.600 0 0 0 0 5.200h2M666.500 30.800h2a2.600 2.600 0 0 1 0 5.200h-2" /><path d="M663 33.400h3.500" stroke-dasharray="1.200 1.200" stroke-width="1.200"/><path d="M663.800 29.300v-1.300M666 29.300v-1.300M663.800 37.500v1.300M666 37.500v1.300" stroke-width="0.900"/></g>
<text class="sf" x="679.00" y="36.80" font-size="9.6" fill="#d48a30">高</text>
<path d="M702.9 31.800l2.600-3.200l2.600 3.200zM702.9 35.700l2.600 3.200l2.600-3.200z" fill="#868686"/>
<g fill="#cfcfcf"><path d="M974 32h4l-2 2.5z"/><rect x="979" y="30" width="5" height="1"/><rect x="979" y="32.5" width="5" height="1"/><rect x="979" y="35" width="5" height="1"/></g>
<path d="M198.500 52.500l4 4M202.500 52.500l-4 4" stroke="#dadada" stroke-width="1.200"/>
<path d="M424.500 52.500l4 4M428.500 52.500l-4 4" stroke="#dadada" stroke-width="1.200"/>
<text x="731.60" y="58.00" font-size="9.8" fill="#e4e4e4">预览</text>
<path d="M767 52.500l4 4M771 52.500l-4 4" stroke="#d0d0d0" stroke-width="1.200"/>
<path d="M794.800 50.700l3.300 3.300l-3.300 3.300M799.600 50.700l3.300 3.300l-3.300 3.300" fill="none" stroke="#d6d6d6" stroke-width="1.500"/>
<path d="M8.3 49.8l-2 2l2 2zM11.5 49.8l-2 2l2 2z" fill="#e0e0e0"/>
<path d="M797.800 71.500l4-5l4 5z" fill="#f2f2f2"/>
<g transform="translate(18 79) scale(0.920)"><path d="M-3.6 -7.6V5.2l2.9-2.700l2.300 5.200l2.200-0.900l-2.300-5h4.100z" fill="#3a3a3a" stroke="#f0f0f0" stroke-width="1.3" stroke-linejoin="round"/></g>
<g transform="translate(42 79) scale(0.920)"><path d="M-3.6 -7.6V5.2l2.9-2.700l2.300 5.200l2.200-0.900l-2.300-5h4.100z" fill="#f4f4f4" stroke="#f4f4f4" stroke-width="0.6" stroke-linejoin="round"/></g>
<path d="M53 87v-3.2l-3.2 3.2z" fill="#e8e8e8"/>
<g transform="translate(18 98) scale(0.920)"><path d="M-1 -1l7 8" stroke="#dedede" stroke-width="2.2" stroke-linecap="round"/><path d="M-3.5 -9l1 3.5l3.5-1.5l-2 3l3 2l-3.7 0.3l-0.3 3.8l-2-3.2l-3.2 2l1.6-3.5l-3.2-1.6l3.7-0.5z" fill="#dedede"/></g>
<g transform="translate(42 98) scale(0.920)"><ellipse cx="0" cy="-1.5" rx="7.5" ry="5" fill="none" stroke="#dedede" stroke-width="1.8"/><path d="M-5 2q-2 3 0 5.5" fill="none" stroke="#dedede" stroke-width="1.5"/><path d="M-0.5 -1.5v9l2.4-2.4l2 4l1.8-0.8l-2-4h3.5z" fill="#dedede" stroke="#474747" stroke-width="0.6"/></g>
<g transform="translate(18 118) scale(0.920)"><path d="M-6.500 7.500Q-6.140 2.200 -2.970 -1.690L0.140 -2.820L3.820 0.860L2.690 3.970Q-1.200 7.140 -6.500 7.500Z" fill="#dedede"/><path d="M0.220 -3.880L2.840 -6.500L7.500 -1.840L4.880 0.780Z" fill="#dedede"/><path d="M-6.200 7.200L-2.200 3.200" stroke="#474747" stroke-width="0.900"/><circle cx="-1.700" cy="2.700" r="1.150" fill="#474747"/></g>
<path d="M28 126v-3.2l-3.2 3.2z" fill="#e8e8e8"/>
<g transform="translate(44 118) scale(0.920)"><path d="M-6.500 7.500Q-6.140 2.200 -2.970 -1.690L0.140 -2.820L3.820 0.860L2.690 3.970Q-1.200 7.140 -6.500 7.500Z" fill="#dedede"/><path d="M0.220 -3.880L2.840 -6.500L7.500 -1.840L4.880 0.780Z" fill="#dedede"/><path d="M-6.200 7.200L-2.200 3.200" stroke="#474747" stroke-width="0.900"/><circle cx="-1.700" cy="2.700" r="1.150" fill="#474747"/><path d="M-7 -5q-3.5 6-1 11q2 3 5 0" fill="none" stroke="#dedede" stroke-width="1.4"/></g>
<path d="M53 126v-3.2l-3.2 3.2z" fill="#e8e8e8"/>
<path d="M28 144v-3.2l-3.2 3.2z" fill="#e8e8e8"/>
<g transform="translate(42 136) scale(0.920)"><path d="M-6 7l12-14" stroke="#dedede" stroke-width="1.6"/></g>
<path d="M53 144v-3.2l-3.2 3.2z" fill="#e8e8e8"/>
<g transform="translate(18 155) scale(0.920)"><rect x="-7" y="-5.5" width="14" height="11" rx="2.5" fill="#8e8e8e" stroke="#dedede" stroke-width="1.3"/></g>
<path d="M28 163v-3.2l-3.2 3.2z" fill="#e8e8e8"/>
<g transform="translate(42 155) scale(0.920)"><path d="M7 -8l1.2 1.2l-8 9.5l-2.2-2z" fill="#dedede"/><path d="M-2.8 1.8l2 2q-1 4-7 3.5q3-1.5 2.5-3.5q0.5-2 2.500-2z" fill="#dedede"/></g>
<path d="M53 163v-3.2l-3.2 3.2z" fill="#e8e8e8"/>
<g transform="translate(18 173) scale(0.920)"><path d="M4.500 -8.500l3.500 3.500l-10 10l-4.800 1.500l1.300-5z" fill="#dedede"/><path d="M2.500 -6.500l3.500 3.500" stroke="#474747" stroke-width="1"/><path d="M-4.800 2.800l3 3" stroke="#474747" stroke-width="0.8"/></g>
<path d="M28 181v-3.2l-3.2 3.2z" fill="#e8e8e8"/>
<g transform="translate(42 173) scale(0.920)"><path d="M-1 -7h8l-6 8h-8z" fill="#dedede"/><path d="M-7.500 2.500h8.500l6-8v4l-6 8h-8.500z" fill="#a8a8a8" stroke="#dedede" stroke-width="0.800"/></g>
<path d="M53 181v-3.2l-3.2 3.2z" fill="#e8e8e8"/>
<g transform="translate(18 194) scale(0.920)"><circle cx="0" cy="0.500" r="6.500" fill="none" stroke="#dedede" stroke-width="1.500" stroke-dasharray="2.200 1.600"/><path d="M-3 -9l5 2.500l-4.500 3z" fill="#dedede"/></g>
<path d="M28 202v-3.2l-3.2 3.2z" fill="#e8e8e8"/>
<g transform="translate(42 194) scale(0.920)"><rect x="-7.500" y="-1" width="9" height="7.500" fill="none" stroke="#dedede" stroke-width="1.300"/><rect x="-3.500" y="-7" width="11" height="9" fill="#6a6a6a" stroke="#dedede" stroke-width="1.300"/><path d="M1 -1l4-4M2.200 -5.200h3v3" fill="none" stroke="#dedede" stroke-width="1.200"/></g>
<path d="M53 202v-3.2l-3.2 3.2z" fill="#e8e8e8"/>
<g transform="translate(18 212.5) scale(0.920)"><path d="M-7 6q1-5 5-6q-4-2-3-6q3 1 4 4q2-5 6-5q0 4-3 6q5 0 6 4q-4 2-7-1q0 4-3 6q-2-2-1-5q-2 3-4 3z" fill="#dedede"/></g>
<path d="M28 220.5v-3.2l-3.2 3.2z" fill="#e8e8e8"/>
<g transform="translate(42 212.5) scale(0.920)"><rect x="-3.500" y="-6" width="11" height="11" fill="none" stroke="#dedede" stroke-width="1.600" stroke-dasharray="2 1.800"/><path d="M-8 -6.500l8 4.200l-3.200 0.800l2 3.600l-1.600 0.900l-2-3.600l-2.300 2.300z" fill="#dedede"/></g>
<g transform="translate(18 232) scale(0.920)"><circle cx="-2.500" cy="-2.500" r="5.500" fill="#8a8a8a" stroke="#dedede" stroke-width="1.200"/><circle cx="-1" cy="-1" r="3" fill="none" stroke="#dedede" stroke-width="1"/><path d="M0.500 -1v9.500l2.400-2.400l2 4l1.800-0.800l-2-4h3.500z" fill="#dedede" stroke="#474747" stroke-width="0.600"/></g>
<path d="M28 240v-3.2l-3.2 3.2z" fill="#e8e8e8"/>
<g transform="translate(42 232) scale(0.920)"><path d="M-6 -8v14l14 1l-3-6zM-2.500 -5v11.500M1 -2.500v9.300M4.500 0v7M-6 -3.500l9.500 3.500M-6 1l12 2.500" fill="none" stroke="#dedede" stroke-width="1.500"/></g>
<path d="M53 240v-3.2l-3.2 3.2z" fill="#e8e8e8"/>
<g transform="translate(18 251) scale(0.920)"><rect x="-7.500" y="-6" width="15" height="12" fill="#3a3a3a" stroke="#dedede" stroke-width="1.300"/><path d="M-7.500 -2q4-3 7.500 0t7.500 -0.500M-7.500 2.500q4 2 7.500 0t7.500 1M-3 -6q2 6 0 12M2.500 -6q-2 6 1 12" fill="none" stroke="#dedede" stroke-width="1.200"/></g>
<g transform="translate(42 251) scale(0.920)"><rect x="-7.500" y="-6" width="15" height="12" fill="url(#tg)" stroke="#dedede" stroke-width="1.300"/></g>
<g transform="translate(18 270) scale(0.920)"><path d="M-7 8l1.500-3.500l6.500-6.500l2 2l-6.500 6.500z" fill="none" stroke="#dedede" stroke-width="1.300"/><path d="M0 -3.500l3.500 3.500l1.500-1.500l-0.800-0.800l2.800-2.800q1.300-2-0.300-3.400q-1.500-1.300-3.200 0l-2.800 2.800l-0.800-0.800z" fill="#dedede"/></g>
<path d="M28 278v-3.2l-3.2 3.2z" fill="#e8e8e8"/>
<g transform="translate(42 270) scale(0.920)"><rect x="-7.500" y="-8" width="8" height="8" fill="#dedede"/><circle cx="-0.500" cy="-1" r="4.500" fill="#8a8a8a" stroke="#dedede" stroke-width="1.200"/><circle cx="3.500" cy="3" r="4.500" fill="#474747" stroke="#dedede" stroke-width="1.500"/></g>
<path d="M53 278v-3.2l-3.2 3.2z" fill="#e8e8e8"/>
<g transform="translate(18 290.5) scale(0.920)"><rect x="-4" y="-3" width="10" height="11" rx="1.500" fill="none" stroke="#dedede" stroke-width="1.500"/><circle cx="1" cy="2.500" r="2.300" fill="none" stroke="#dedede" stroke-width="1.300"/><path d="M-1 -3v-3h4v3M-2.500 -6.500h-3M-3 -8.500l-3-1.500M-3 -4.500l-3 1" fill="none" stroke="#dedede" stroke-width="1.200"/></g>
<path d="M28 298.5v-3.2l-3.2 3.2z" fill="#e8e8e8"/>
<g transform="translate(42 290.5) scale(0.920)"><path d="M-7.500 -8v15.500h15.500" fill="none" stroke="#dedede" stroke-width="1.200"/><rect x="-4.500" y="-1" width="3" height="7" fill="#dedede"/><rect x="-0.500" y="-7" width="3" height="13" fill="#dedede"/><rect x="3.500" y="-3.500" width="3" height="9.500" fill="#dedede"/></g>
<path d="M53 298.5v-3.2l-3.2 3.2z" fill="#e8e8e8"/>
<g transform="translate(18 310) scale(0.920)"><path d="M-4.500 -8.500v17M4.500 -8.500v17M-8.500 -4.500h17M-8.500 4.500h17" fill="none" stroke="#dedede" stroke-width="1.300"/><rect x="-4.500" y="-4.500" width="9" height="9" fill="#6a6a6a" stroke="#dedede" stroke-width="1.300"/></g>
<g transform="translate(42 310) scale(0.920)"><path d="M8 -8q-8 2-12 9l2.500 2q7-4 9.500-11zM-4.500 2l-3.500 5.500l5.500-3.500z" fill="#dedede"/><path d="M5 -6l-7 8" stroke="#474747" stroke-width="0.800"/></g>
<path d="M53 318v-3.2l-3.2 3.2z" fill="#e8e8e8"/>
<g transform="translate(18 329) scale(0.920)"><path d="M-3.500 8q-3-4-5-6q-1-1.500 0.300-2.300q1.200-0.500 2.500 0.800l1.200 1.300v-7.300q0-1.300 1.100-1.300t1.100 1.300v-2q0-1.300 1.100-1.300t1.100 1.300v0.800q0-1.300 1.100-1.300t1.100 1.300v1.400q0-1.200 1.100-1.200t1.100 1.200v6.500q0 4-2 6.800z" fill="#dedede"/></g>
<path d="M28 337v-3.2l-3.2 3.2z" fill="#e8e8e8"/>
<g transform="translate(42 329) scale(0.920)"><circle cx="-1.500" cy="-2" r="5" fill="#6a6a6a" stroke="#dedede" stroke-width="1.800"/><path d="M2.200 2l5 5.500" stroke="#dedede" stroke-width="2.600" stroke-linecap="round"/></g>
<path d="M22.500 382l26-25" stroke="#d81f26" stroke-width="1.600"/>
<g fill="none" stroke="#e4e4e4" stroke-width="1.200"><path d="M41.500 346.500q3.500-3 6 0.500M47.500 351.500q-3.500 3-6-0.500"/><path d="M47 343.500l1 3.800l-3.600 0.200M42 354.500l-1-3.800l3.600-0.200" stroke-width="1"/></g>
<rect x="25.500" y="391.500" width="10.500" height="10.500" fill="url(#tg2)" stroke="#bdbdbd"/>
<rect x="40" y="391.500" width="10.500" height="10.500" fill="#fff" stroke="#bdbdbd"/><path d="M40.500 401.500l9.500-9.500" stroke="#e0222a" stroke-width="2"/>
<circle cx="16" cy="415" r="3.600" fill="none" stroke="#e6e6e6" stroke-width="1.200"/><rect x="16.5" y="415.500" width="4.500" height="4.500" fill="#dcdcdc" stroke="#555" stroke-width="0.500"/>
<circle cx="30.5" cy="415" r="3.600" fill="none" stroke="#e6e6e6" stroke-width="1.200"/><rect x="31" y="415.500" width="4.500" height="4.500" fill="#dcdcdc" stroke="#555" stroke-width="0.500"/>
<circle cx="45.5" cy="415" r="3.600" fill="none" stroke="#e6e6e6" stroke-width="1.200"/><rect x="46" y="415.500" width="4.500" height="4.500" fill="#dcdcdc" stroke="#555" stroke-width="0.500"/>
<rect x="24.500" y="429.500" width="13" height="9" fill="#7a7a7a" stroke="#d8d8d8" stroke-width="1.100"/><rect x="20.500" y="433.500" width="12" height="8.500" fill="#5a5a5a" stroke="#cfcfcf" stroke-width="1.100"/>
<path d="M986.500 48.500l2.500 2.500l-2.500 2.500zM990.500 48.500l2.500 2.500l-2.500 2.500z" fill="#e0e0e0"/>
<path d="M814.500 62l2.200-2.800l2.200 2.800zM814.500 64.500l2.200 2.800l2.200-2.800z" fill="#e8e8e8"/>
<text x="821.00" y="67.30" font-size="9.3" font-weight="bold" fill="#f2f2f2">颜色</text>
<text x="850.00" y="67.50" font-size="9.6" fill="#9a9a9a">颜色参考</text>
<text x="898.00" y="67.50" font-size="10.5" fill="#9a9a9a">描边</text>
<text x="928.00" y="67.50" font-size="10.5" fill="#9a9a9a">渐变</text>
<g fill="#cfcfcf"><path d="M982.500 62h4l-2 2.500z"/><rect x="987" y="60" width="5.500" height="1"/><rect x="987" y="62.500" width="5.500" height="1"/><rect x="987" y="65" width="5.500" height="1"/></g>
<g fill="none" stroke="#e0e0e0" stroke-width="1.300"><path d="M830 79.500q0.500-2.500 3.500-2.200M838 82q-0.500 2.500-3.500 2.200"/><path d="M832.500 75l2.200 2.300l-2.200 2.300M835.500 82l-2.200 2.300l2.200 2.300" stroke-width="1.200"/></g>
<path d="M822.500 111.500l15-14" stroke="#d81f26" stroke-width="1.300"/>
<g stroke="#c4c4c4" stroke-width="1.100" stroke-linejoin="round"><path d="M823 123.500l4.600 2.300v5.600l-4.600 2.600l-4.600-2.600v-5.600z" fill="#8a8a8a"/><path d="M818.400 125.800l4.600 2.400l4.600-2.400M823 128.200v5.800" fill="none"/></g>
<rect x="865" y="83.2" width="80" height="3.500" rx="1" fill="url(#sr)"/>
<path d="M885.5 87.8l3.200 3.800h-6.400z" fill="#f2f2f2" stroke="#333" stroke-width="0.600"/>
<rect x="865" y="108.7" width="80" height="3.500" rx="1" fill="url(#sg)"/>
<path d="M875.5 113.3l3.200 3.800h-6.400z" fill="#f2f2f2" stroke="#333" stroke-width="0.600"/>
<rect x="865" y="134.7" width="80" height="3.500" rx="1" fill="url(#sb)"/>
<path d="M868 139.3l3.200 3.800h-6.400z" fill="#f2f2f2" stroke="#333" stroke-width="0.600"/>
<path d="M814.500 169.500l9.500-9" stroke="#e0222a" stroke-width="1.300"/>
<text x="816.50" y="342.00" font-size="9.4" fill="#9a9a9a">色板</text>
<text x="844.50" y="342.00" font-size="9.4" fill="#9a9a9a">画笔</text>
<text x="875.00" y="342.00" font-size="9.4" fill="#9a9a9a">图层</text>
<text x="905.00" y="342.00" font-size="10.2" fill="#f4f4f4">路径查找器</text>
<g fill="#cfcfcf"><path d="M982.500 336.500h4l-2 2.500z"/><rect x="987" y="334.500" width="5.500" height="1"/><rect x="987" y="337" width="5.500" height="1"/><rect x="987" y="339.500" width="5.500" height="1"/></g>
<text class="sf" x="814.50" y="360.00" font-size="9.8" font-weight="bold" fill="#dedede">形状模式</text>
<g transform="translate(824.5 373) scale(0.880)"><rect x="-5.500" y="-5.500" width="7.500" height="7.500" fill="#787878" stroke="#dcdcdc" stroke-width="1"/><rect x="-1.500" y="-1.500" width="7.500" height="7.500" fill="#787878" stroke="#dcdcdc" stroke-width="1"/><path d="M-1.500 2v-3.500h3.500" fill="none" stroke="#bbb" stroke-width="0.800"/></g>
<g transform="translate(851.5 373) scale(0.880)"><rect x="-5.500" y="-5.500" width="7.500" height="7.500" fill="#dcdcdc" stroke="#dcdcdc" stroke-width="1"/><rect x="-1.500" y="-1.500" width="7.500" height="7.500" fill="#4a4a4a" stroke="#dcdcdc" stroke-width="1"/></g>
<g transform="translate(880 373) scale(0.880)"><rect x="-5.500" y="-5.500" width="7.500" height="7.500" fill="#4a4a4a" stroke="#dcdcdc" stroke-width="1"/><rect x="-1.500" y="-1.500" width="7.500" height="7.500" fill="#4a4a4a" stroke="#dcdcdc" stroke-width="1"/><rect x="-1.500" y="-1.500" width="3.500" height="3.500" fill="#dcdcdc"/></g>
<g transform="translate(907.5 373) scale(0.880)"><rect x="-5.500" y="-5.500" width="7.500" height="7.500" fill="#dcdcdc" stroke="#dcdcdc" stroke-width="1"/><rect x="-1.500" y="-1.500" width="7.500" height="7.500" fill="#dcdcdc" stroke="#dcdcdc" stroke-width="1"/><rect x="-1.500" y="-1.500" width="3.500" height="3.500" fill="#4a4a4a" stroke="#dcdcdc" stroke-width="0.800"/></g>
<text x="946.50" y="376.80" font-size="9.4" fill="#7e7e7e">扩展</text>
<text class="sf" x="814.50" y="396.50" font-size="9.8" font-weight="bold" fill="#dedede">路径查找器</text>
<g transform="translate(826 411) scale(0.880)"><rect x="-5.500" y="-5" width="6.500" height="6" fill="#dcdcdc" stroke="#dcdcdc" stroke-width="1"/><rect x="-1" y="-1" width="6.500" height="6" fill="#787878" stroke="#dcdcdc" stroke-width="1"/><rect x="-1" y="-1" width="2" height="2" fill="#4a4a4a"/></g>
<g transform="translate(854.5 411) scale(0.880)"><rect x="-5.500" y="-5" width="6.500" height="6" fill="#dcdcdc" stroke="#dcdcdc" stroke-width="1"/><rect x="-1" y="-1" width="6.500" height="6" fill="#dcdcdc" stroke="#dcdcdc" stroke-width="1"/><rect x="-1" y="-1" width="2" height="2" fill="#4a4a4a"/></g>
<g transform="translate(884 411) scale(0.880)"><rect x="-5.500" y="-5" width="6.500" height="6" fill="#787878" stroke="#dcdcdc" stroke-width="1"/><rect x="-1" y="-1" width="6.500" height="6" fill="#dcdcdc" stroke="#dcdcdc" stroke-width="1"/></g>
<g transform="translate(912 411) scale(0.880)"><rect x="-5.500" y="-5" width="6.500" height="6" fill="#787878" stroke="#787878" stroke-width="1"/><rect x="-1" y="-1" width="6.500" height="6" fill="#787878" stroke="#787878" stroke-width="1"/><rect x="-1" y="-1" width="2" height="2" fill="#dcdcdc"/></g>
<g transform="translate(942 411) scale(0.880)"><rect x="-5.500" y="-5" width="6.500" height="6" fill="#4a4a4a" stroke="#dcdcdc" stroke-width="1"/><rect x="-1" y="-1" width="6.500" height="6" fill="#4a4a4a" stroke="#dcdcdc" stroke-width="1"/></g>
<g transform="translate(971 411) scale(0.880)"><rect x="-5.500" y="-5" width="6.500" height="6" fill="#4a4a4a" stroke="#dcdcdc" stroke-width="1"/><rect x="-1" y="-1" width="6.500" height="6" fill="#dcdcdc" stroke="#dcdcdc" stroke-width="1"/></g>
<path d="M814.500 433l2-2.600l2 2.600zM814.500 435l2 2.600l2-2.600z" fill="#e8e8e8"/>
<text x="821.00" y="438.00" font-size="9.6" fill="#e6e6e6">透明度</text>
<g fill="#cfcfcf"><path d="M982.500 433h4l-2 2.500z"/><rect x="987" y="431" width="5.500" height="1"/><rect x="987" y="433.500" width="5.500" height="1"/><rect x="987" y="436" width="5.500" height="1"/></g>
<path d="M979 450.500l4.500 3l-4.500 3z" fill="#f0f0f0"/>
<path d="M888.500 500.500q7.500 5 15 0" fill="none" stroke="#d6d6d6" stroke-width="2.200"/>
<text x="930.00" y="484.80" font-size="8.6" fill="#d0d0d0">制作蒙版</text>
<text x="934.00" y="501.00" font-size="9" fill="#5c5c5c">剪切</text>
<text x="934.00" y="518.50" font-size="9.4" fill="#787878">反相蒙版</text>
<g fill="#fff" stroke="#7a7a7a" stroke-width="0.700"><path d="M832 502.500q-2 4 1 6.500q3 2 5 4M843 498q-3.500 4.500-3.500 7.500q1.500 3 1.500 5" fill="none"/><ellipse cx="841.600" cy="488.200" rx="8.300" ry="9.800" transform="rotate(6 841.600 488.200)"/><ellipse cx="831.300" cy="492.800" rx="8.400" ry="9.600" transform="rotate(8 831.300 492.800)"/></g>
<g fill="none" stroke="#c9c9c9" stroke-width="1.100"><path d="M819.500 488.500q4-2.500 5.500 0.500v7.500M825 492q-6 0-6 3q0.500 2.500 3.500 1.500q2-0.800 2.500-2.500M829 497v-9.500M829 490.500q4-4 6.500-0.500v7M846.500 486v0.100M846.500 489.500v9q-0.500 2-2 2"/></g>
<g id="art"><path d="M380.0 389.0C380.7 390.0 383.2 393.2 384.0 395.0C384.8 396.8 385.2 397.5 385.0 400.0C384.800 402.500 384.0 406.5 383.0 410.0C382.0 413.5 380.4 417.5 379.0 421.0C377.6 424.5 375.4 427.8 374.5 431.0C373.6 434.2 373.1 436.8 373.5 440.0C373.9 443.2 374.9 446.9 376.6 450.0C378.4 453.1 381.3 456.2 384.0 458.5C386.7 460.8 390.3 462.4 393.0 463.5C395.7 464.6 397.9 464.8 400.0 465.0C402.1 465.2 404.6 464.6 405.5 464.5" fill="none" stroke="#ea9ee6" stroke-width="4.400" stroke-linecap="round" opacity="0.5"/><path d="M405.5 464.5C405.9 465.4 406.6 468.2 408.0 470.0C409.4 471.8 411.4 473.9 414.0 475.2C416.6 476.5 420.5 477.7 423.7 478.0C426.9 478.3 430.3 477.8 433.0 477.0C435.7 476.2 438.0 474.7 440.0 473.5C442.0 472.3 444.0 470.4 444.8 469.8" fill="none" stroke="#ea9ee6" stroke-width="4.400" stroke-linecap="round" opacity="0.5"/><path d="M444.8 469.8C445.2 470.8 446.0 474.0 447.0 476.0C448.0 478.0 449.5 480.2 451.0 482.0C452.5 483.8 454.0 485.2 456.0 486.5C458.0 487.8 461.8 489.0 463.0 489.5" fill="none" stroke="#ea9ee6" stroke-width="4.400" stroke-linecap="round" opacity="0.5"/><path d="M441.5 330.0C441.8 331.8 443.2 337.3 443.4 341.0C443.6 344.7 443.2 348.2 442.5 352.0C441.8 355.8 440.8 359.8 439.0 364.0C437.2 368.2 435.2 373.1 432.0 377.4C428.8 381.7 423.3 386.2 419.5 390.0C415.7 393.8 411.8 397.0 409.0 400.4C406.2 403.8 404.2 407.2 402.5 410.5C400.8 413.8 399.5 416.9 399.0 420.0C398.5 423.1 398.8 426.3 399.5 429.0C400.2 431.7 401.4 434.1 403.0 436.0C404.6 437.9 407.0 439.7 409.0 440.5C411.0 441.3 413.1 441.5 415.0 441.0C416.9 440.5 419.0 439.2 420.5 437.5C422.0 435.8 423.6 433.0 424.0 431.0C424.4 429.0 423.8 426.5 423.0 425.5C422.2 424.5 420.4 424.2 419.3 425.0C418.2 425.8 417.0 427.7 416.3 430.0C415.6 432.3 415.3 435.8 415.3 439.0C415.3 442.2 415.8 446.0 416.5 449.0C417.2 452.0 418.2 454.6 419.5 457.0C420.8 459.4 422.2 461.5 424.0 463.5C425.8 465.5 427.8 467.5 430.0 469.0C432.2 470.5 434.5 472.5 437.0 472.6C439.5 472.7 443.5 470.3 444.8 469.8" fill="none" stroke="#ea9ee6" stroke-width="4.400" stroke-linecap="round" opacity="0.5"/><path d="M380.0 389.0C380.7 390.0 383.2 393.2 384.0 395.0C384.8 396.8 385.2 397.5 385.0 400.0C384.8 402.5 384.0 406.5 383.0 410.0C382.0 413.5 380.4 417.5 379.0 421.0C377.6 424.5 375.4 427.8 374.5 431.0C373.6 434.2 373.1 436.8 373.5 440.0C373.9 443.2 374.9 446.9 376.6 450.0C378.4 453.1 381.3 456.2 384.0 458.5C386.7 460.8 390.3 462.4 393.0 463.5C395.7 464.6 397.9 464.8 400.0 465.0C402.1 465.2 404.6 464.6 405.5 464.5" fill="none" stroke="#36090f" stroke-width="2.900" stroke-linecap="round" stroke-linejoin="round"/><path d="M405.5 464.5C405.9 465.4 406.6 468.2 408.0 470.0C409.4 471.8 411.4 473.9 414.0 475.2C416.6 476.5 420.5 477.7 423.7 478.0C426.9 478.3 430.3 477.8 433.0 477.0C435.7 476.2 438.0 474.7 440.0 473.5C442.0 472.3 444.0 470.4 444.8 469.8" fill="none" stroke="#36090f" stroke-width="2.900" stroke-linecap="round" stroke-linejoin="round"/><path d="M444.8 469.8C445.2 470.8 446.0 474.0 447.0 476.0C448.0 478.0 449.5 480.2 451.0 482.0C452.5 483.8 454.0 485.2 456.0 486.5C458.0 487.8 461.8 489.0 463.0 489.5" fill="none" stroke="#36090f" stroke-width="2.900" stroke-linecap="round" stroke-linejoin="round"/><path d="M441.5 330.0C441.8 331.8 443.2 337.3 443.4 341.0C443.6 344.7 443.2 348.2 442.5 352.0C441.8 355.8 440.8 359.8 439.0 364.0C437.2 368.2 435.2 373.1 432.0 377.4C428.8 381.7 423.3 386.2 419.5 390.0C415.7 393.8 411.8 397.0 409.0 400.4C406.2 403.8 404.2 407.2 402.5 410.5C400.8 413.8 399.5 416.9 399.0 420.0C398.5 423.1 398.8 426.3 399.5 429.0C400.2 431.7 401.4 434.1 403.0 436.0C404.6 437.9 407.0 439.7 409.0 440.5C411.0 441.3 413.1 441.5 415.0 441.0C416.9 440.5 419.0 439.2 420.5 437.5C422.0 435.8 423.6 433.0 424.0 431.0C424.4 429.0 423.8 426.5 423.0 425.5C422.2 424.5 420.4 424.2 419.3 425.0C418.2 425.8 417.0 427.7 416.3 430.0C415.6 432.3 415.3 435.8 415.3 439.0C415.3 442.2 415.8 446.0 416.5 449.0C417.2 452.0 418.2 454.6 419.5 457.0C420.8 459.4 422.2 461.5 424.0 463.5C425.8 465.5 427.8 467.5 430.0 469.0C432.2 470.5 434.5 472.5 437.0 472.6C439.5 472.7 443.5 470.3 444.8 469.8" fill="none" stroke="#36090f" stroke-width="2.900" stroke-linecap="round" stroke-linejoin="round"/><path d="M444.500 315.500q-3 7-2 14.500q1.500 2 3.500 1.800q2 3.700 6.500 2.800q2.500-0.700 3.200-3q3 3.200 6.800 1.900q2.400-1 2.800-3.800q2.800 2.400 5.600 1q2.400-1.600 2.400-5q0-4-2.800-9.700z" fill="#e656b7" stroke="#5a1535" stroke-width="2" stroke-linejoin="round"/><path d="M443.500 318q14 3.500 28.500-0.500" fill="none" stroke="#fff" stroke-width="2.800"/><path d="M378.3 218.0C377.5 213.6 376.8 209.1 376.5 204.5C376.3 199.9 376.3 195.1 376.9 190.3C377.4 185.6 378.3 180.8 379.8 176.1C381.2 171.4 383.1 166.7 385.4 162.3C387.7 157.9 390.5 153.6 393.7 149.7C396.8 145.7 400.5 142.0 404.4 138.7C408.3 135.4 412.6 132.3 417.1 129.8C421.6 127.3 426.4 125.1 431.3 123.5C436.2 121.9 441.4 120.7 446.5 120.1C451.6 119.4 456.9 119.3 462.0 119.6C467.1 119.9 472.3 120.7 477.2 121.9C482.1 123.2 487.0 124.9 491.6 126.9C496.2 129.0 500.6 131.5 504.7 134.2C508.8 136.9 512.7 140.1 516.2 143.3C519.8 146.6 523.1 150.2 526.0 154.0C529.0 157.7 531.6 161.7 533.9 165.7C536.2 169.8 538.2 174.0 539.9 178.3C541.5 182.6 542.9 187.0 543.9 191.4C544.9 195.8 545.7 200.2 546.1 204.7C546.5 209.1 546.7 213.6 546.6 218.0C546.5 222.4 546.1 226.8 545.5 231.2C544.9 235.6 544.0 240.0 542.9 244.3C541.8 248.6 540.5 252.9 538.9 257.2C537.3 261.4 535.4 265.7 533.3 269.8C531.1 273.9 528.7 278.0 525.9 281.9C523.1 285.8 520.0 289.6 516.6 293.1C513.1 296.6 509.3 300.0 505.3 302.9C501.2 305.8 496.7 308.5 492.1 310.6C487.4 312.6 482.4 314.3 477.4 315.3C472.4 316.3 467.1 316.8 462.0 316.6C456.9 316.4 451.7 315.6 446.8 314.2C441.9 312.8 437.0 310.7 432.7 308.3C428.3 305.9 424.1 302.8 420.4 299.6C416.7 296.3 413.4 292.7 410.4 289.0C407.4 285.3 404.9 281.4 402.5 277.5C400.1 273.7 398.1 269.7 396.1 265.9C394.2 262.0 392.4 258.2 390.7 254.3C389.0 250.5 387.4 246.7 385.9 242.7C384.4 238.8 382.9 234.8 381.6 230.7C380.4 226.6 379.2 222.4 378.3 218.0Z" fill="#fff" stroke="#3b1012" stroke-width="3.100" stroke-linejoin="round"/><path d="M382.4 219.2C381.5 215.0 380.9 210.6 380.6 206.1C380.4 201.7 380.4 197.0 381.0 192.5C381.5 187.9 382.4 183.2 383.8 178.7C385.1 174.2 387.0 169.7 389.2 165.4C391.4 161.2 394.1 157.0 397.2 153.2C400.2 149.4 403.8 145.8 407.5 142.6C411.3 139.4 415.5 136.4 419.8 134.0C424.1 131.6 428.8 129.5 433.5 127.9C438.3 126.4 443.3 125.2 448.2 124.6C453.2 124.0 458.3 123.8 463.2 124.1C468.1 124.4 473.1 125.2 477.9 126.4C482.7 127.6 487.4 129.3 491.8 131.2C496.2 133.2 500.5 135.6 504.4 138.3C508.4 140.9 512.2 143.9 515.6 147.1C519.0 150.3 522.2 153.8 525.0 157.4C527.9 161.0 530.4 164.8 532.7 168.7C534.9 172.6 536.8 176.7 538.4 180.9C540.0 185.0 541.3 189.2 542.3 193.5C543.3 197.7 544.0 202.0 544.4 206.3C544.9 210.6 545.0 214.9 544.9 219.2C544.8 223.5 544.4 227.7 543.9 232.0C543.3 236.2 542.4 240.4 541.4 244.6C540.3 248.8 539.0 252.9 537.5 257.0C535.9 261.1 534.1 265.2 532.0 269.2C529.9 273.2 527.6 277.1 524.9 280.9C522.2 284.7 519.2 288.4 515.9 291.8C512.6 295.1 508.9 298.4 505.0 301.2C501.0 304.0 496.7 306.6 492.3 308.6C487.8 310.6 482.9 312.2 478.1 313.2C473.2 314.2 468.1 314.7 463.2 314.5C458.3 314.3 453.2 313.5 448.5 312.1C443.8 310.8 439.1 308.8 434.9 306.4C430.6 304.1 426.6 301.1 423.1 298.0C419.5 294.9 416.3 291.3 413.4 287.8C410.5 284.2 408.0 280.4 405.7 276.7C403.4 273.0 401.5 269.2 399.6 265.4C397.7 261.7 396.0 258.0 394.3 254.3C392.7 250.6 391.1 246.9 389.7 243.1C388.2 239.3 386.8 235.5 385.6 231.5C384.4 227.5 383.2 223.4 382.4 219.2Z" fill="url(#gp)"/><path d="M449.2 242.5C448.5 241.4 446.7 238.6 445.0 236.0C443.3 233.4 441.0 230.2 439.0 227.0C437.0 223.8 434.6 220.2 433.0 217.0C431.4 213.8 430.4 210.9 429.6 208.0C428.8 205.1 428.4 202.5 428.4 199.5C428.4 196.5 428.8 193.1 429.5 190.0C430.2 186.9 431.2 183.8 432.5 181.0C433.8 178.2 435.2 175.3 437.0 173.0C438.8 170.7 441.0 168.5 443.0 167.0C445.0 165.5 447.0 164.6 449.0 164.0C451.0 163.4 452.8 163.1 455.0 163.2C457.2 163.3 459.8 163.7 462.0 164.6C464.2 165.5 466.4 167.0 468.0 168.8C469.6 170.6 470.9 173.0 471.8 175.5C472.7 178.0 473.1 181.1 473.2 184.0C473.3 186.9 473.0 189.8 472.3 193.0C471.6 196.2 470.4 199.5 469.0 203.0C467.6 206.5 465.5 210.2 463.6 214.0C461.7 217.8 459.4 222.3 457.6 226.0C455.8 229.7 454.0 233.2 452.6 236.0C451.2 238.8 449.8 241.4 449.2 242.5Z" fill="#8a1f69"/><ellipse cx="449.500" cy="270.500" rx="6.800" ry="10" fill="#8a1f69"/><path d="M497.0 156.0C498.4 156.1 499.8 156.1 501.8 158.4C503.8 160.7 506.9 164.9 509.2 169.9C511.5 174.9 513.6 183.0 515.4 188.7C517.2 194.4 519.0 200.1 519.8 204.0C520.6 207.9 520.2 209.3 520.0 212.0C519.8 214.7 519.2 216.6 518.6 220.0C518.0 223.4 517.0 228.8 516.1 232.2C515.2 235.6 514.1 238.5 513.3 240.5C512.5 242.5 512.0 244.2 511.3 244.0C510.6 243.8 509.7 242.7 509.2 239.0C508.7 235.3 508.8 227.3 508.3 222.0C507.9 216.7 507.6 211.8 506.5 207.0C505.4 202.2 503.4 198.1 501.8 192.9C500.2 187.8 498.1 180.9 496.6 176.1C495.1 171.3 493.5 167.0 493.0 164.0C492.5 161.0 492.9 159.3 493.6 158.0C494.3 156.7 495.6 155.9 497.0 156.0Z" fill="#fff"/><ellipse cx="503.900" cy="260.400" rx="4.200" ry="8.600" transform="rotate(24 503.900 260.400)" fill="#fff"/><path d="M363 370q-3 8-0.500 16.500q1.200 3.200 4.500 4.400q4.500 1.200 7.500-2.200q1.200-1.800 3.200-2.900q1.800 2.600 5.500 2.500q4-0.600 5.300-3.800q0.500-1.700 1.700-2.900q2.800 1.600 6 0.200q3.200-1.700 4.300-4.500q1-2.500 0.500-4.500q-0.800-2.300-3-4.300z" fill="#fbda4e" stroke="#3b1012" stroke-width="2.400" stroke-linejoin="round"/><path d="M363.500 372.500q18 3 34-4.500" fill="none" stroke="#fff" stroke-width="2.800"/><path d="M271.7 273.0C271.7 268.4 272.0 263.7 272.5 259.1C273.1 254.5 273.9 249.9 275.1 245.4C276.2 240.9 277.6 236.3 279.4 231.9C281.2 227.5 283.2 223.1 285.6 219.0C288.0 214.8 290.8 210.7 293.9 206.9C296.9 203.0 300.4 199.4 304.1 196.1C307.9 192.8 312.0 189.8 316.3 187.2C320.6 184.6 325.3 182.4 330.0 180.7C334.8 179.1 339.8 177.8 344.8 177.1C349.8 176.5 355.0 176.3 360.0 176.7C365.0 177.0 370.1 178.0 374.8 179.3C379.6 180.6 384.3 182.5 388.7 184.6C393.1 186.8 397.3 189.4 401.2 192.1C405.1 194.9 408.8 197.9 412.2 201.1C415.6 204.3 418.8 207.7 421.8 211.2C424.8 214.7 427.6 218.3 430.1 222.1C432.7 225.8 435.1 229.7 437.2 233.7C439.3 237.7 441.3 241.8 442.9 246.1C444.5 250.3 445.9 254.8 446.9 259.2C447.8 263.7 448.5 268.4 448.8 273.0C449.0 277.6 448.9 282.4 448.5 287.0C448.0 291.7 447.2 296.4 446.0 300.9C444.8 305.5 443.3 310.1 441.5 314.5C439.6 318.9 437.5 323.3 435.0 327.5C432.6 331.7 429.8 335.8 426.7 339.7C423.6 343.6 420.2 347.3 416.5 350.7C412.7 354.1 408.7 357.3 404.3 360.0C400.0 362.7 395.3 365.1 390.5 366.9C385.7 368.8 380.6 370.2 375.5 371.0C370.4 371.8 365.1 372.1 360.0 371.8C354.9 371.6 349.7 370.8 344.7 369.6C339.7 368.4 334.8 366.7 330.2 364.7C325.6 362.6 321.1 360.2 317.0 357.5C312.8 354.8 308.8 351.7 305.2 348.5C301.5 345.2 298.1 341.7 295.0 338.0C291.9 334.3 289.1 330.4 286.6 326.3C284.1 322.3 281.9 318.1 280.0 313.7C278.2 309.4 276.6 305.0 275.4 300.5C274.2 296.0 273.2 291.4 272.6 286.8C272.0 282.3 271.7 277.6 271.7 273.0Z" fill="#fff" stroke="#3b1012" stroke-width="3.100" stroke-linejoin="round"/><path d="M275.6 274.1C275.6 269.6 275.9 265.1 276.4 260.7C277.0 256.2 277.8 251.8 278.9 247.4C280.0 243.0 281.4 238.6 283.1 234.3C284.8 230.1 286.8 225.8 289.1 221.8C291.4 217.7 294.1 213.8 297.1 210.1C300.1 206.4 303.4 202.8 307.0 199.7C310.6 196.5 314.6 193.5 318.8 191.0C323.0 188.6 327.5 186.4 332.1 184.8C336.7 183.2 341.6 182.0 346.4 181.3C351.2 180.7 356.3 180.5 361.1 180.9C365.9 181.2 370.8 182.1 375.5 183.4C380.1 184.7 384.6 186.5 388.9 188.5C393.2 190.6 397.2 193.1 401.0 195.8C404.8 198.5 408.3 201.4 411.6 204.5C415.0 207.6 418.0 210.9 420.9 214.3C423.8 217.6 426.5 221.2 429.0 224.8C431.5 228.4 433.8 232.1 435.8 236.0C437.9 239.9 439.8 243.9 441.3 248.0C442.9 252.2 444.2 256.4 445.2 260.8C446.1 265.1 446.8 269.6 447.0 274.1C447.3 278.6 447.2 283.2 446.7 287.7C446.3 292.2 445.5 296.7 444.3 301.1C443.2 305.6 441.7 310.0 440.0 314.3C438.2 318.6 436.1 322.8 433.7 326.9C431.3 330.9 428.7 334.9 425.7 338.7C422.7 342.4 419.4 346.1 415.8 349.3C412.2 352.6 408.2 355.7 404.0 358.3C399.8 361.0 395.3 363.3 390.6 365.0C386.0 366.8 381.0 368.1 376.1 368.9C371.2 369.7 366.1 370.0 361.1 369.8C356.1 369.5 351.1 368.8 346.3 367.6C341.5 366.5 336.7 364.8 332.3 362.8C327.8 360.9 323.5 358.5 319.4 355.9C315.4 353.2 311.6 350.3 308.0 347.1C304.5 344.0 301.2 340.6 298.2 337.0C295.2 333.4 292.5 329.6 290.0 325.7C287.6 321.8 285.5 317.7 283.7 313.5C281.9 309.4 280.4 305.1 279.2 300.7C278.0 296.4 277.1 291.9 276.5 287.5C275.9 283.1 275.7 278.6 275.6 274.1Z" fill="url(#gy)"/><path d="M334.1 233.9 L359.7 256.5 L388.2 251.2 L377.6 278.2 L405.6 312.5 L364.1 308.6 L347.2 336.6 L337.5 300.4 L303.3 285.0 L331.7 268.1 Z" fill="#8b7416" stroke="#8b7416" stroke-width="4.600" stroke-linejoin="round"/><rect x="305.05" y="256" width="10.5" height="4.400" rx="2.200" fill="#8b7416" transform="rotate(20 310.3 258.2)"/><rect x="358.75" y="234.8" width="9.5" height="4.400" rx="2.200" fill="#8b7416" transform="rotate(-66 363.5 237)"/><rect x="390.5" y="272.8" width="11" height="4.400" rx="2.200" fill="#8b7416" transform="rotate(-14 396 275)"/><rect x="313.25" y="304.3" width="12.5" height="4.400" rx="2.200" fill="#8b7416" transform="rotate(-17 319.5 306.5)"/><rect x="364.3" y="322.3" width="16" height="4.400" rx="2.200" fill="#8b7416" transform="rotate(62 372.3 324.5)"/><path d="M371.8 206.5C372.1 205.5 373.2 203.8 375.0 203.3C376.8 202.8 379.2 202.4 382.6 203.3C386.0 204.2 391.4 206.3 395.2 209.0C399.0 211.7 402.6 215.2 405.7 219.4C408.8 223.6 411.9 229.2 414.0 234.0C416.1 238.8 417.7 244.0 418.6 248.0C419.5 252.0 419.6 255.4 419.5 258.0C419.4 260.6 418.9 263.3 418.2 263.5C417.4 263.7 416.1 261.2 415.0 259.0C413.9 256.8 412.7 252.8 411.5 250.0C410.3 247.2 410.2 246.5 407.8 242.4C405.4 238.3 400.8 230.0 397.3 225.7C393.8 221.3 390.0 218.7 386.8 216.3C383.6 213.9 380.3 212.6 378.0 211.5C375.7 210.4 374.2 210.3 373.2 209.5C372.2 208.7 371.5 207.5 371.8 206.5Z" fill="#fff"/><ellipse cx="422.800" cy="288" rx="3.800" ry="7" transform="rotate(6 422.800 288)" fill="#fff"/></g>
<path d="M145 516.500h6l-3 4z" fill="#f2f2f2"/>
<g fill="#6c6c6c"><rect x="160.500" y="515" width="1.300" height="6.500"/><path d="M166.500 515v6.500l-4.500-3.250z"/><path d="M178 515v6.500l-4.500-3.250z"/></g>
<path d="M221 516.500h6l-3 4z" fill="#f2f2f2"/>
<g fill="#6c6c6c"><path d="M238 515v6.500l4.500-3.250z"/><path d="M249 515v6.500l4.500-3.250z"/><rect x="253.800" y="515" width="1.300" height="6.500"/></g>
<text class="sf" x="322.00" y="522.00" font-size="9.4" fill="#e2e2e2">直接选择</text>
<path d="M424 514.500v7l4.500-3.500z" fill="#ececec"/>
<path d="M442 514.500v7l-4.500-3.500z" fill="#f4f4f4"/>
<path d="M786 514.500v7l4.500-3.500z" fill="#f4f4f4"/>
<g><rect x="4.500" y="503" width="20" height="20.500" rx="4" fill="#2fb321" transform="rotate(-8 14.500 513)"/><path d="M19.500 508.800q-5-2.800-9.500-0.600q-3 2.400 0.800 4.600l5.200 1.800q2.600 1.600-0.200 3.400q-4 1.400-8.300-1.600" fill="none" stroke="#fff" stroke-width="3" stroke-linecap="round"/></g>
<text x="28.50" y="519.50" font-size="12.5" font-weight="bold" fill="#2a2f45">五</text>
<path d="M56 507.500a6.200 6.200 0 1 0 2.500 10.500a7.500 7.500 0 0 1-2.500-10.500z" fill="#2a2f45"/>
<g fill="#2a2f45"><circle cx="66" cy="511" r="1.700" fill="none" stroke="#2a2f45" stroke-width="1.200"/><path d="M70.500 513.500a1.800 1.800 0 1 1 1.600 2.200q0 2-2 3.200q1.200-1.700 0.400-5.400z"/></g>
<g><rect x="80" y="508" width="12.500" height="9.500" rx="1.500" fill="#2a2f45"/><g fill="#fff"><rect x="82" y="510" width="1.500" height="1.300"/><rect x="84.500" y="510" width="1.500" height="1.300"/><rect x="87" y="510" width="1.500" height="1.300"/><rect x="89.500" y="510" width="1.500" height="1.300"/><rect x="82" y="512.300" width="1.500" height="1.300"/><rect x="84.500" y="512.300" width="1.500" height="1.300"/><rect x="87" y="512.300" width="1.500" height="1.300"/><rect x="89.500" y="512.300" width="1.500" height="1.300"/><rect x="83.500" y="514.800" width="5.500" height="1.300"/></g></g>
<g fill="#bcdccf"><circle cx="102.500" cy="510" r="2.600"/><path d="M97.500 520q0-6 5-6t5 6z"/></g>
<g fill="#2a2f45" transform="translate(12 51) scale(0.900)"><path d="M124.500 507.200a4 4 0 0 0-5.300 4.800l-4.800 5a1.700 1.700 0 0 0 2.400 2.400l5-4.800a4 4 0 0 0 4.800-5.300l-2.600 2.600l-2.200-0.600l-0.500-2.100z"/></g>
<g fill="#cdcdcd" opacity="0.93"><ellipse cx="844.600" cy="427.600" rx="5.600" ry="8.400"/><ellipse cx="861" cy="429.800" rx="6" ry="8.800"/><ellipse cx="832.400" cy="439.700" rx="5.400" ry="7.600" transform="rotate(-12 832.400 439.700)"/><ellipse cx="871" cy="443.500" rx="5.400" ry="7.800" transform="rotate(10 871 443.500)"/></g><path d="M838 459.500q0-5 4-8.500q6-8 11.500-8q5 0 10.500 7q4.500 2.500 8.500 5.500q4 2 4 4zM843 459.500v-4.500h4v4.500zM850 459.500v-3h5v3zM859 459.500v-4.500h4.500v4.500zM866.500 459.500v-3h3v3z" fill="#f2f2f2" fill-rule="evenodd"/><g fill="#e4e4e4"><rect x="818" y="446.500" width="4" height="3.500"/><rect x="818" y="451.500" width="3.500" height="3.500"/><rect x="818" y="456" width="4" height="3.500"/><path d="M823 449h6v2h-4v3h4v5h-6zM831 450h5v9.500h-5z" opacity="0.9"/></g>
<clipPath id="wmc"><rect x="876" y="440" width="64" height="19.500"/></clipPath>
<g clip-path="url(#wmc)">
<text x="878.50" y="470.00" font-size="29" font-weight="bold" fill="#f6f6f6">经验</text>
</g>
<path d="M801.500 506.500l2.500-3q5-7 8.500-18" fill="none" stroke="#ececec" stroke-width="1.800" stroke-linecap="round"/><path d="M801 507l3-3.500" stroke="#f4f4f4" stroke-width="2.600" stroke-linecap="round"/>
<g fill="#e6e6e6"><rect x="868.500" y="481" width="3" height="1.500"/><rect x="882" y="481" width="2.500" height="1.500"/></g>
</svg>
</div></body></html>
